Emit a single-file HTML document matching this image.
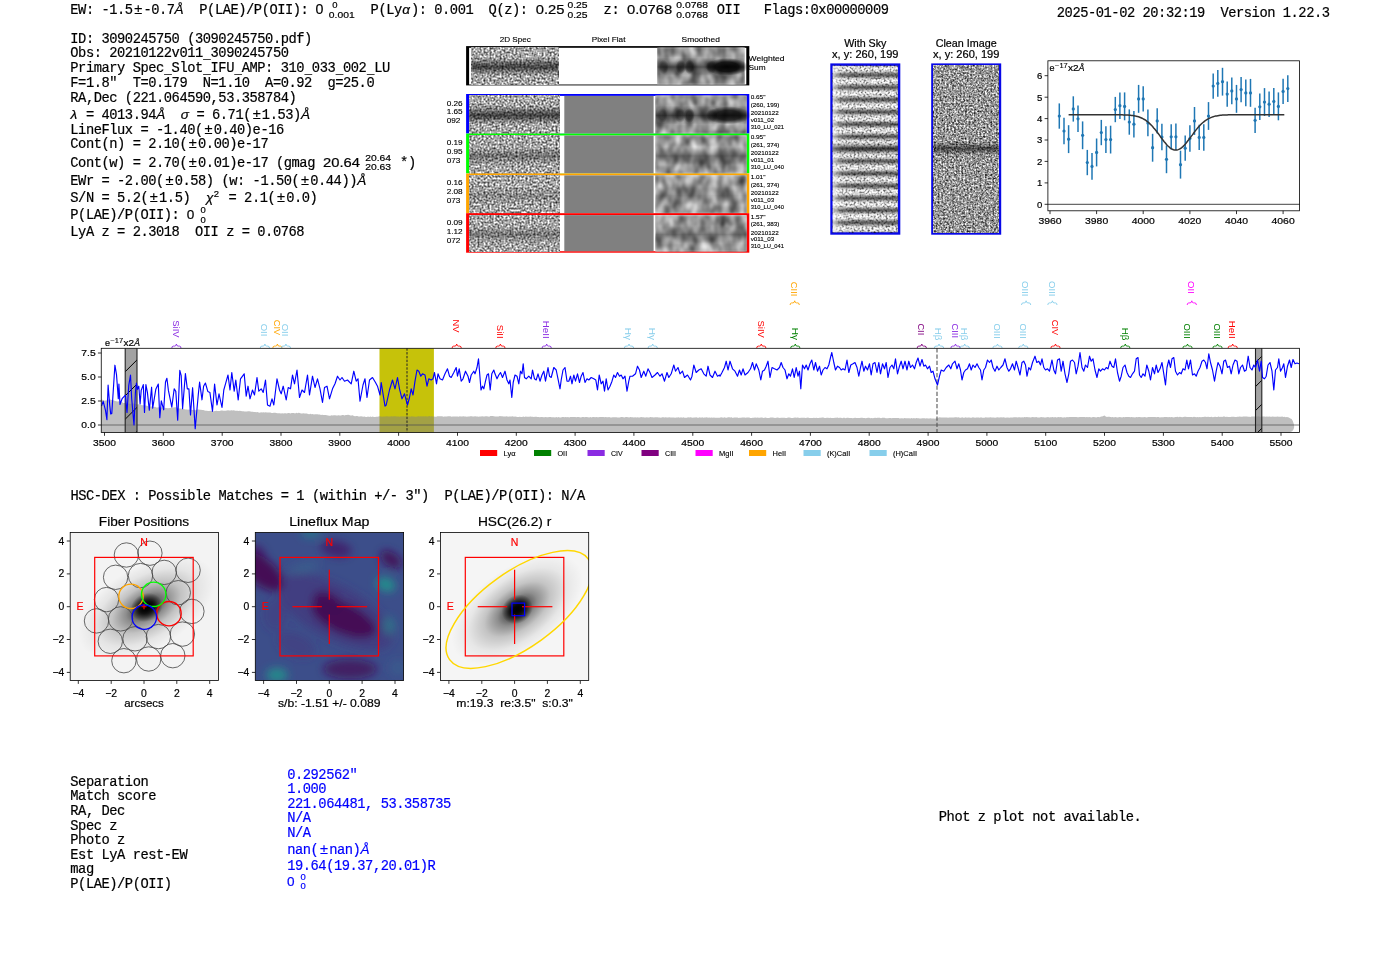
<!DOCTYPE html><html><head><meta charset="utf-8"><title>ELiXer</title><style>html,body{margin:0;padding:0;background:#fff;overflow:hidden}svg{display:block}text{white-space:pre}</style></head><body><svg width="1400" height="953" viewBox="0 0 1400 953" font-family="Liberation Sans, sans-serif"><rect width="1400" height="953" fill="#fff"/><defs><filter id="nz0" x="0" y="0" width="100%" height="100%" color-interpolation-filters="sRGB"><feTurbulence type="fractalNoise" baseFrequency="0.5 0.5" numOctaves="2" seed="3" result="t"/><feColorMatrix type="matrix" values="1.45 0 0 0 -0.075  1.45 0 0 0 -0.075  1.45 0 0 0 -0.075  0 0 0 0 1"/><feGaussianBlur stdDeviation="0.5"/></filter><filter id="sm0" x="0" y="0" width="100%" height="100%" color-interpolation-filters="sRGB"><feTurbulence type="fractalNoise" baseFrequency="0.11 0.07" numOctaves="2" seed="11" result="t"/><feColorMatrix type="matrix" values="0.95 0 0 0 0.115  0.95 0 0 0 0.115  0.95 0 0 0 0.115  0 0 0 0 1"/><feGaussianBlur stdDeviation="0.8"/></filter><filter id="nz1" x="0" y="0" width="100%" height="100%" color-interpolation-filters="sRGB"><feTurbulence type="fractalNoise" baseFrequency="0.5 0.5" numOctaves="2" seed="10" result="t"/><feColorMatrix type="matrix" values="1.45 0 0 0 -0.075  1.45 0 0 0 -0.075  1.45 0 0 0 -0.075  0 0 0 0 1"/><feGaussianBlur stdDeviation="0.5"/></filter><filter id="sm1" x="0" y="0" width="100%" height="100%" color-interpolation-filters="sRGB"><feTurbulence type="fractalNoise" baseFrequency="0.11 0.07" numOctaves="2" seed="16" result="t"/><feColorMatrix type="matrix" values="0.95 0 0 0 0.115  0.95 0 0 0 0.115  0.95 0 0 0 0.115  0 0 0 0 1"/><feGaussianBlur stdDeviation="0.8"/></filter><filter id="nz2" x="0" y="0" width="100%" height="100%" color-interpolation-filters="sRGB"><feTurbulence type="fractalNoise" baseFrequency="0.5 0.5" numOctaves="2" seed="17" result="t"/><feColorMatrix type="matrix" values="1.45 0 0 0 -0.075  1.45 0 0 0 -0.075  1.45 0 0 0 -0.075  0 0 0 0 1"/><feGaussianBlur stdDeviation="0.5"/></filter><filter id="sm2" x="0" y="0" width="100%" height="100%" color-interpolation-filters="sRGB"><feTurbulence type="fractalNoise" baseFrequency="0.11 0.07" numOctaves="2" seed="21" result="t"/><feColorMatrix type="matrix" values="0.95 0 0 0 0.115  0.95 0 0 0 0.115  0.95 0 0 0 0.115  0 0 0 0 1"/><feGaussianBlur stdDeviation="0.8"/></filter><filter id="nz3" x="0" y="0" width="100%" height="100%" color-interpolation-filters="sRGB"><feTurbulence type="fractalNoise" baseFrequency="0.5 0.5" numOctaves="2" seed="24" result="t"/><feColorMatrix type="matrix" values="1.45 0 0 0 -0.075  1.45 0 0 0 -0.075  1.45 0 0 0 -0.075  0 0 0 0 1"/><feGaussianBlur stdDeviation="0.5"/></filter><filter id="sm3" x="0" y="0" width="100%" height="100%" color-interpolation-filters="sRGB"><feTurbulence type="fractalNoise" baseFrequency="0.11 0.07" numOctaves="2" seed="26" result="t"/><feColorMatrix type="matrix" values="0.95 0 0 0 0.115  0.95 0 0 0 0.115  0.95 0 0 0 0.115  0 0 0 0 1"/><feGaussianBlur stdDeviation="0.8"/></filter><filter id="nz4" x="0" y="0" width="100%" height="100%" color-interpolation-filters="sRGB"><feTurbulence type="fractalNoise" baseFrequency="0.5 0.5" numOctaves="2" seed="31" result="t"/><feColorMatrix type="matrix" values="1.45 0 0 0 -0.075  1.45 0 0 0 -0.075  1.45 0 0 0 -0.075  0 0 0 0 1"/><feGaussianBlur stdDeviation="0.5"/></filter><filter id="sm4" x="0" y="0" width="100%" height="100%" color-interpolation-filters="sRGB"><feTurbulence type="fractalNoise" baseFrequency="0.11 0.07" numOctaves="2" seed="31" result="t"/><feColorMatrix type="matrix" values="0.95 0 0 0 0.115  0.95 0 0 0 0.115  0.95 0 0 0 0.115  0 0 0 0 1"/><feGaussianBlur stdDeviation="0.8"/></filter><filter id="nz5" x="0" y="0" width="100%" height="100%" color-interpolation-filters="sRGB"><feTurbulence type="fractalNoise" baseFrequency="0.5 0.5" numOctaves="2" seed="38" result="t"/><feColorMatrix type="matrix" values="1.45 0 0 0 -0.075  1.45 0 0 0 -0.075  1.45 0 0 0 -0.075  0 0 0 0 1"/><feGaussianBlur stdDeviation="0.5"/></filter><filter id="sm5" x="0" y="0" width="100%" height="100%" color-interpolation-filters="sRGB"><feTurbulence type="fractalNoise" baseFrequency="0.11 0.07" numOctaves="2" seed="36" result="t"/><feColorMatrix type="matrix" values="0.95 0 0 0 0.115  0.95 0 0 0 0.115  0.95 0 0 0 0.115  0 0 0 0 1"/><feGaussianBlur stdDeviation="0.8"/></filter><filter id="nz6" x="0" y="0" width="100%" height="100%" color-interpolation-filters="sRGB"><feTurbulence type="fractalNoise" baseFrequency="0.5 0.5" numOctaves="2" seed="45" result="t"/><feColorMatrix type="matrix" values="1.45 0 0 0 -0.075  1.45 0 0 0 -0.075  1.45 0 0 0 -0.075  0 0 0 0 1"/><feGaussianBlur stdDeviation="0.5"/></filter><filter id="sm6" x="0" y="0" width="100%" height="100%" color-interpolation-filters="sRGB"><feTurbulence type="fractalNoise" baseFrequency="0.11 0.07" numOctaves="2" seed="41" result="t"/><feColorMatrix type="matrix" values="0.95 0 0 0 0.115  0.95 0 0 0 0.115  0.95 0 0 0 0.115  0 0 0 0 1"/><feGaussianBlur stdDeviation="0.8"/></filter><filter id="nz7" x="0" y="0" width="100%" height="100%" color-interpolation-filters="sRGB"><feTurbulence type="fractalNoise" baseFrequency="0.5 0.5" numOctaves="2" seed="52" result="t"/><feColorMatrix type="matrix" values="1.45 0 0 0 -0.075  1.45 0 0 0 -0.075  1.45 0 0 0 -0.075  0 0 0 0 1"/><feGaussianBlur stdDeviation="0.5"/></filter><filter id="sm7" x="0" y="0" width="100%" height="100%" color-interpolation-filters="sRGB"><feTurbulence type="fractalNoise" baseFrequency="0.11 0.07" numOctaves="2" seed="46" result="t"/><feColorMatrix type="matrix" values="0.95 0 0 0 0.115  0.95 0 0 0 0.115  0.95 0 0 0 0.115  0 0 0 0 1"/><feGaussianBlur stdDeviation="0.8"/></filter><linearGradient id="band" x1="0" y1="0" x2="0" y2="1"><stop offset="0.26" stop-color="#000" stop-opacity="0"/><stop offset="0.40" stop-color="#000" stop-opacity="0.38"/><stop offset="0.52" stop-color="#000" stop-opacity="0.66"/><stop offset="0.62" stop-color="#000" stop-opacity="0.38"/><stop offset="0.76" stop-color="#000" stop-opacity="0"/></linearGradient><linearGradient id="band2" x1="0" y1="0" x2="0" y2="1"><stop offset="0.3" stop-color="#000" stop-opacity="0"/><stop offset="0.54" stop-color="#000" stop-opacity="0.38"/><stop offset="0.78" stop-color="#000" stop-opacity="0"/></linearGradient><radialGradient id="hot"><stop offset="0" stop-color="#000" stop-opacity="1"/><stop offset="0.55" stop-color="#000" stop-opacity="0.85"/><stop offset="1" stop-color="#000" stop-opacity="0"/></radialGradient><linearGradient id="lfade" x1="0" y1="0" x2="1" y2="0"><stop offset="0" stop-color="#fff" stop-opacity="0.7"/><stop offset="0.12" stop-color="#fff" stop-opacity="0.15"/><stop offset="0.3" stop-color="#fff" stop-opacity="0"/></linearGradient><linearGradient id="stripes" x1="0" y1="0" x2="0" y2="12.3" gradientUnits="userSpaceOnUse" spreadMethod="repeat"><stop offset="0.0" stop-color="rgb(100,100,100)"/><stop offset="0.1" stop-color="rgb(124,124,124)"/><stop offset="0.2" stop-color="rgb(179,179,179)"/><stop offset="0.3" stop-color="rgb(228,228,228)"/><stop offset="0.4" stop-color="rgb(250,250,250)"/><stop offset="0.5" stop-color="rgb(253,253,253)"/><stop offset="0.6" stop-color="rgb(250,250,250)"/><stop offset="0.7" stop-color="rgb(228,228,228)"/><stop offset="0.8" stop-color="rgb(179,179,179)"/><stop offset="0.9" stop-color="rgb(124,124,124)"/><stop offset="1.0" stop-color="rgb(100,100,100)"/></linearGradient><filter id="sky" x="0" y="0" width="100%" height="100%" color-interpolation-filters="sRGB"><feTurbulence type="fractalNoise" baseFrequency="0.5 0.5" numOctaves="2" seed="21" result="t"/><feColorMatrix type="matrix" values="1.9 0 0 0 -0.1  1.9 0 0 0 -0.1  1.9 0 0 0 -0.1  0 0 0 0 1"/><feGaussianBlur stdDeviation="0.4"/></filter><filter id="cln" x="0" y="0" width="100%" height="100%" color-interpolation-filters="sRGB"><feTurbulence type="fractalNoise" baseFrequency="0.55 0.55" numOctaves="2" seed="33" result="t"/><feColorMatrix type="matrix" values="1.45 0 0 0 -0.135  1.45 0 0 0 -0.135  1.45 0 0 0 -0.135  0 0 0 0 1"/><feGaussianBlur stdDeviation="0.4"/></filter><linearGradient id="cband" x1="0" y1="0" x2="0" y2="1"><stop offset="0.455" stop-color="#000" stop-opacity="0"/><stop offset="0.497" stop-color="#000" stop-opacity="0.55"/><stop offset="0.54" stop-color="#000" stop-opacity="0"/></linearGradient><radialGradient id="gal"><stop offset="0" stop-color="#000" stop-opacity="0.97"/><stop offset="0.07" stop-color="#000" stop-opacity="0.9"/><stop offset="0.16" stop-color="#000" stop-opacity="0.66"/><stop offset="0.3" stop-color="#000" stop-opacity="0.42"/><stop offset="0.5" stop-color="#000" stop-opacity="0.2"/><stop offset="0.75" stop-color="#000" stop-opacity="0.06"/><stop offset="1" stop-color="#000" stop-opacity="0"/></radialGradient><radialGradient id="core"><stop offset="0" stop-color="#000" stop-opacity="0.95"/><stop offset="0.45" stop-color="#000" stop-opacity="0.7"/><stop offset="1" stop-color="#000" stop-opacity="0"/></radialGradient><filter id="bl" x="-20%" y="-20%" width="140%" height="140%"><feGaussianBlur stdDeviation="4.2"/></filter></defs>
<text transform="translate(70.30,13.90) scale(1,1.025)" font-family="Liberation Mono" font-size="13.775" letter-spacing="-0.468" fill="#000" stroke="#000" stroke-width="0.2" xml:space="preserve">EW: -1.5</text>
<text x="138.28" y="13.90" text-anchor="middle" font-family="Liberation Sans" font-size="14.6" fill="#000" stroke="#000" stroke-width="0.15">±</text>
<text transform="translate(143.48,13.90) scale(1,1.025)" font-family="Liberation Mono" font-size="13.775" letter-spacing="-0.468" fill="#000" stroke="#000" stroke-width="0.2" xml:space="preserve">-0.7</text>
<text x="174.60" y="13.90" font-family="Liberation Sans" font-size="13.55" fill="#000" stroke="#000" stroke-width="0.2" text-anchor="start" font-style="italic" xml:space="preserve">Å</text>
<text transform="translate(199.30,13.90) scale(1,1.025)" font-family="Liberation Mono" font-size="13.775" letter-spacing="-0.468" fill="#000" stroke="#000" stroke-width="0.2" xml:space="preserve">P(LAE)/P(OII):</text>
<text x="315.60" y="13.90" font-family="Liberation Sans" font-size="14.19" fill="#000" stroke="#000" stroke-width="0.2" text-anchor="start" xml:space="preserve">0</text>
<text x="332.30" y="7.60" font-family="Liberation Sans" font-size="9.48" fill="#000" stroke="#000" stroke-width="0.2" text-anchor="start" xml:space="preserve">0</text>
<text x="328.80" y="17.50" font-family="Liberation Sans" font-size="9.48" fill="#000" stroke="#000" stroke-width="0.2" text-anchor="start" textLength="25.85" lengthAdjust="spacingAndGlyphs" xml:space="preserve">0.001</text>
<text transform="translate(370.60,13.90) scale(1,1.025)" font-family="Liberation Mono" font-size="13.775" letter-spacing="-0.468" fill="#000" stroke="#000" stroke-width="0.2" xml:space="preserve">P(Ly</text>
<text x="402.29" y="13.90" font-family="Liberation Sans" font-size="13.55" fill="#000" stroke="#000" stroke-width="0.2" text-anchor="start" font-style="italic" xml:space="preserve">α</text>
<text transform="translate(410.89,13.90) scale(1,1.025)" font-family="Liberation Mono" font-size="13.775" letter-spacing="-0.468" fill="#000" stroke="#000" stroke-width="0.2" xml:space="preserve">): 0.001</text>
<text transform="translate(488.60,13.90) scale(1,1.025)" font-family="Liberation Mono" font-size="13.775" letter-spacing="-0.468" fill="#000" stroke="#000" stroke-width="0.2" xml:space="preserve">Q(z):</text>
<text x="535.80" y="13.90" font-family="Liberation Sans" font-size="13.55" fill="#000" stroke="#000" stroke-width="0.2" text-anchor="start" textLength="28.72" lengthAdjust="spacingAndGlyphs" xml:space="preserve">0.25</text>
<text x="567.50" y="7.60" font-family="Liberation Sans" font-size="9.48" fill="#000" stroke="#000" stroke-width="0.2" text-anchor="start" textLength="20.11" lengthAdjust="spacingAndGlyphs" xml:space="preserve">0.25</text>
<text x="567.50" y="17.50" font-family="Liberation Sans" font-size="9.48" fill="#000" stroke="#000" stroke-width="0.2" text-anchor="start" textLength="20.11" lengthAdjust="spacingAndGlyphs" xml:space="preserve">0.25</text>
<text transform="translate(603.60,13.90) scale(1,1.025)" font-family="Liberation Mono" font-size="13.775" letter-spacing="-0.468" fill="#000" stroke="#000" stroke-width="0.2" xml:space="preserve">z:</text>
<text x="627.00" y="13.90" font-family="Liberation Sans" font-size="13.55" fill="#000" stroke="#000" stroke-width="0.2" text-anchor="start" textLength="45.14" lengthAdjust="spacingAndGlyphs" xml:space="preserve">0.0768</text>
<text x="676.30" y="7.60" font-family="Liberation Sans" font-size="9.48" fill="#000" stroke="#000" stroke-width="0.2" text-anchor="start" textLength="31.60" lengthAdjust="spacingAndGlyphs" xml:space="preserve">0.0768</text>
<text x="676.30" y="17.50" font-family="Liberation Sans" font-size="9.48" fill="#000" stroke="#000" stroke-width="0.2" text-anchor="start" textLength="31.60" lengthAdjust="spacingAndGlyphs" xml:space="preserve">0.0768</text>
<text transform="translate(716.80,13.90) scale(1,1.025)" font-family="Liberation Mono" font-size="13.775" letter-spacing="-0.468" fill="#000" stroke="#000" stroke-width="0.2" xml:space="preserve">OII</text>
<text transform="translate(763.80,13.90) scale(1,1.025)" font-family="Liberation Mono" font-size="13.775" letter-spacing="-0.468" fill="#000" stroke="#000" stroke-width="0.2" xml:space="preserve">Flags:0x00000009</text>
<text transform="translate(1056.80,16.60) scale(1,1.025)" font-family="Liberation Mono" font-size="13.775" letter-spacing="-0.468" fill="#000" stroke="#000" stroke-width="0.2" xml:space="preserve">2025-01-02 20:32:19  Version 1.22.3</text>
<text transform="translate(70.30,42.50) scale(1,1.025)" font-family="Liberation Mono" font-size="13.775" letter-spacing="-0.468" fill="#000" stroke="#000" stroke-width="0.2" xml:space="preserve">ID: 3090245750 (3090245750.pdf)</text>
<rect x="203.05" y="59.25" width="7.80" height="0.75" fill="#000"/>
<text transform="translate(70.30,56.90) scale(1,1.025)" font-family="Liberation Mono" font-size="13.775" letter-spacing="-0.468" fill="#000" stroke="#000" stroke-width="0.2" xml:space="preserve">Obs: 20210122v011 3090245750</text>
<rect x="164.06" y="74.15" width="7.80" height="0.75" fill="#000"/>
<rect x="203.05" y="74.15" width="7.80" height="0.75" fill="#000"/>
<rect x="234.24" y="74.15" width="7.80" height="0.75" fill="#000"/>
<rect x="304.41" y="74.15" width="7.80" height="0.75" fill="#000"/>
<rect x="335.60" y="74.15" width="7.80" height="0.75" fill="#000"/>
<rect x="366.79" y="74.15" width="7.80" height="0.75" fill="#000"/>
<text transform="translate(70.30,71.80) scale(1,1.025)" font-family="Liberation Mono" font-size="13.775" letter-spacing="-0.468" fill="#000" stroke="#000" stroke-width="0.2" xml:space="preserve">Primary Spec Slot IFU AMP: 310 033 002 LU</text>
<text transform="translate(70.30,86.80) scale(1,1.025)" font-family="Liberation Mono" font-size="13.775" letter-spacing="-0.468" fill="#000" stroke="#000" stroke-width="0.2" xml:space="preserve">F=1.8"  T=0.179  N=1.10  A=0.92  g=25.0</text>
<text transform="translate(70.30,101.80) scale(1,1.025)" font-family="Liberation Mono" font-size="13.775" letter-spacing="-0.468" fill="#000" stroke="#000" stroke-width="0.2" xml:space="preserve">RA,Dec (221.064590,53.358784)</text>
<text x="70.50" y="118.50" font-family="Liberation Sans" font-size="13.55" fill="#000" stroke="#000" stroke-width="0.2" text-anchor="start" font-style="italic" xml:space="preserve">λ</text>
<text transform="translate(78.10,118.50) scale(1,1.025)" font-family="Liberation Mono" font-size="13.775" letter-spacing="-0.468" fill="#000" stroke="#000" stroke-width="0.2" xml:space="preserve"> = 4013.94</text>
<text x="156.27" y="118.50" font-family="Liberation Sans" font-size="13.55" fill="#000" stroke="#000" stroke-width="0.2" text-anchor="start" font-style="italic" xml:space="preserve">Å</text>
<text x="180.69" y="118.50" font-family="Liberation Sans" font-size="13.55" fill="#000" stroke="#000" stroke-width="0.2" text-anchor="start" font-style="italic" xml:space="preserve">σ</text>
<text transform="translate(188.66,118.50) scale(1,1.025)" font-family="Liberation Mono" font-size="13.775" letter-spacing="-0.468" fill="#000" stroke="#000" stroke-width="0.2" xml:space="preserve"> = 6.71(</text>
<text x="256.64" y="118.50" text-anchor="middle" font-family="Liberation Sans" font-size="14.6" fill="#000" stroke="#000" stroke-width="0.15">±</text>
<text transform="translate(261.85,118.50) scale(1,1.025)" font-family="Liberation Mono" font-size="13.775" letter-spacing="-0.468" fill="#000" stroke="#000" stroke-width="0.2" xml:space="preserve">1.53)</text>
<text x="301.03" y="118.50" font-family="Liberation Sans" font-size="13.55" fill="#000" stroke="#000" stroke-width="0.2" text-anchor="start" font-style="italic" xml:space="preserve">Å</text>
<text transform="translate(70.30,133.60) scale(1,1.025)" font-family="Liberation Mono" font-size="13.775" letter-spacing="-0.468" fill="#000" stroke="#000" stroke-width="0.2" xml:space="preserve">LineFlux = -1.40(</text>
<text x="208.45" y="133.60" text-anchor="middle" font-family="Liberation Sans" font-size="14.6" fill="#000" stroke="#000" stroke-width="0.15">±</text>
<text transform="translate(213.66,133.60) scale(1,1.025)" font-family="Liberation Mono" font-size="13.775" letter-spacing="-0.468" fill="#000" stroke="#000" stroke-width="0.2" xml:space="preserve">0.40)e-16</text>
<text transform="translate(70.30,148.40) scale(1,1.025)" font-family="Liberation Mono" font-size="13.775" letter-spacing="-0.468" fill="#000" stroke="#000" stroke-width="0.2" xml:space="preserve">Cont(n) = 2.10(</text>
<text x="192.86" y="148.40" text-anchor="middle" font-family="Liberation Sans" font-size="14.6" fill="#000" stroke="#000" stroke-width="0.15">±</text>
<text transform="translate(198.06,148.40) scale(1,1.025)" font-family="Liberation Mono" font-size="13.775" letter-spacing="-0.468" fill="#000" stroke="#000" stroke-width="0.2" xml:space="preserve">0.00)e-17</text>
<text transform="translate(70.30,166.90) scale(1,1.025)" font-family="Liberation Mono" font-size="13.775" letter-spacing="-0.468" fill="#000" stroke="#000" stroke-width="0.2" xml:space="preserve">Cont(w) = 2.70(</text>
<text x="192.86" y="166.90" text-anchor="middle" font-family="Liberation Sans" font-size="14.6" fill="#000" stroke="#000" stroke-width="0.15">±</text>
<text transform="translate(198.06,166.90) scale(1,1.025)" font-family="Liberation Mono" font-size="13.775" letter-spacing="-0.468" fill="#000" stroke="#000" stroke-width="0.2" xml:space="preserve">0.01)e-17 (gmag </text>
<text x="323.02" y="166.90" font-family="Liberation Sans" font-size="13.55" fill="#000" stroke="#000" stroke-width="0.2" text-anchor="start" textLength="36.93" lengthAdjust="spacingAndGlyphs" xml:space="preserve">20.64</text>
<text x="365.15" y="160.50" font-family="Liberation Sans" font-size="9.48" fill="#000" stroke="#000" stroke-width="0.2" text-anchor="start" textLength="25.85" lengthAdjust="spacingAndGlyphs" xml:space="preserve">20.64</text>
<text x="365.15" y="170.10" font-family="Liberation Sans" font-size="9.48" fill="#000" stroke="#000" stroke-width="0.2" text-anchor="start" textLength="25.85" lengthAdjust="spacingAndGlyphs" xml:space="preserve">20.63</text>
<text transform="translate(392.30,166.90) scale(1,1.025)" font-family="Liberation Mono" font-size="13.775" letter-spacing="-0.468" fill="#000" stroke="#000" stroke-width="0.2" xml:space="preserve"> *)</text>
<text transform="translate(70.30,184.60) scale(1,1.025)" font-family="Liberation Mono" font-size="13.775" letter-spacing="-0.468" fill="#000" stroke="#000" stroke-width="0.2" xml:space="preserve">EWr = -2.00(</text>
<text x="169.47" y="184.60" text-anchor="middle" font-family="Liberation Sans" font-size="14.6" fill="#000" stroke="#000" stroke-width="0.15">±</text>
<text transform="translate(174.67,184.60) scale(1,1.025)" font-family="Liberation Mono" font-size="13.775" letter-spacing="-0.468" fill="#000" stroke="#000" stroke-width="0.2" xml:space="preserve">0.58) (w: -1.50(</text>
<text x="305.03" y="184.60" text-anchor="middle" font-family="Liberation Sans" font-size="14.6" fill="#000" stroke="#000" stroke-width="0.15">±</text>
<text transform="translate(310.23,184.60) scale(1,1.025)" font-family="Liberation Mono" font-size="13.775" letter-spacing="-0.468" fill="#000" stroke="#000" stroke-width="0.2" xml:space="preserve">0.44))</text>
<text x="357.22" y="184.60" font-family="Liberation Sans" font-size="13.55" fill="#000" stroke="#000" stroke-width="0.2" text-anchor="start" font-style="italic" xml:space="preserve">Å</text>
<text transform="translate(70.30,202.30) scale(1,1.025)" font-family="Liberation Mono" font-size="13.775" letter-spacing="-0.468" fill="#000" stroke="#000" stroke-width="0.2" xml:space="preserve">S/N = 5.2(</text>
<text x="153.87" y="202.30" text-anchor="middle" font-family="Liberation Sans" font-size="14.6" fill="#000" stroke="#000" stroke-width="0.15">±</text>
<text transform="translate(159.08,202.30) scale(1,1.025)" font-family="Liberation Mono" font-size="13.775" letter-spacing="-0.468" fill="#000" stroke="#000" stroke-width="0.2" xml:space="preserve">1.5)  </text>
<text x="206.06" y="202.30" font-family="Liberation Sans" font-size="13.55" fill="#000" stroke="#000" stroke-width="0.2" text-anchor="start" font-style="italic" xml:space="preserve">χ</text>
<text x="213.69" y="197.30" font-family="Liberation Sans" font-size="9.48" fill="#000" stroke="#000" stroke-width="0.2" text-anchor="start" xml:space="preserve">2</text>
<text transform="translate(220.74,202.30) scale(1,1.025)" font-family="Liberation Mono" font-size="13.775" letter-spacing="-0.468" fill="#000" stroke="#000" stroke-width="0.2" xml:space="preserve"> = 2.1(</text>
<text x="280.92" y="202.30" text-anchor="middle" font-family="Liberation Sans" font-size="14.6" fill="#000" stroke="#000" stroke-width="0.15">±</text>
<text transform="translate(286.13,202.30) scale(1,1.025)" font-family="Liberation Mono" font-size="13.775" letter-spacing="-0.468" fill="#000" stroke="#000" stroke-width="0.2" xml:space="preserve">0.0)</text>
<text transform="translate(70.30,219.40) scale(1,1.025)" font-family="Liberation Mono" font-size="13.775" letter-spacing="-0.468" fill="#000" stroke="#000" stroke-width="0.2" xml:space="preserve">P(LAE)/P(OII): </text>
<text x="186.85" y="219.40" font-family="Liberation Sans" font-size="13.55" fill="#000" stroke="#000" stroke-width="0.2" text-anchor="start" xml:space="preserve">0</text>
<text x="200.46" y="213.00" font-family="Liberation Sans" font-size="9.48" fill="#000" stroke="#000" stroke-width="0.2" text-anchor="start" xml:space="preserve">0</text>
<text x="200.46" y="222.60" font-family="Liberation Sans" font-size="9.48" fill="#000" stroke="#000" stroke-width="0.2" text-anchor="start" xml:space="preserve">0</text>
<text transform="translate(70.30,236.10) scale(1,1.025)" font-family="Liberation Mono" font-size="13.775" letter-spacing="-0.468" fill="#000" stroke="#000" stroke-width="0.2" xml:space="preserve">LyA z = 2.3018  OII z = 0.0768</text>
<text transform="translate(70.40,500.40) scale(1,1.025)" font-family="Liberation Mono" font-size="13.775" letter-spacing="-0.468" fill="#000" stroke="#000" stroke-width="0.2" xml:space="preserve">HSC-DEX : Possible Matches = 1 (within +/- 3")  P(LAE)/P(OII): N/A</text>
<text transform="translate(70.30,785.50) scale(1,1.025)" font-family="Liberation Mono" font-size="13.775" letter-spacing="-0.468" fill="#000" stroke="#000" stroke-width="0.2" xml:space="preserve">Separation</text>
<text transform="translate(70.30,799.90) scale(1,1.025)" font-family="Liberation Mono" font-size="13.775" letter-spacing="-0.468" fill="#000" stroke="#000" stroke-width="0.2" xml:space="preserve">Match score</text>
<text transform="translate(70.30,814.90) scale(1,1.025)" font-family="Liberation Mono" font-size="13.775" letter-spacing="-0.468" fill="#000" stroke="#000" stroke-width="0.2" xml:space="preserve">RA, Dec</text>
<text transform="translate(70.30,829.60) scale(1,1.025)" font-family="Liberation Mono" font-size="13.775" letter-spacing="-0.468" fill="#000" stroke="#000" stroke-width="0.2" xml:space="preserve">Spec z</text>
<text transform="translate(70.30,844.00) scale(1,1.025)" font-family="Liberation Mono" font-size="13.775" letter-spacing="-0.468" fill="#000" stroke="#000" stroke-width="0.2" xml:space="preserve">Photo z</text>
<text transform="translate(70.30,859.00) scale(1,1.025)" font-family="Liberation Mono" font-size="13.775" letter-spacing="-0.468" fill="#000" stroke="#000" stroke-width="0.2" xml:space="preserve">Est LyA rest-EW</text>
<text transform="translate(70.30,873.40) scale(1,1.025)" font-family="Liberation Mono" font-size="13.775" letter-spacing="-0.468" fill="#000" stroke="#000" stroke-width="0.2" xml:space="preserve">mag</text>
<text transform="translate(70.30,888.40) scale(1,1.025)" font-family="Liberation Mono" font-size="13.775" letter-spacing="-0.468" fill="#000" stroke="#000" stroke-width="0.2" xml:space="preserve">P(LAE)/P(OII)</text>
<text transform="translate(287.20,778.60) scale(1,1.025)" font-family="Liberation Mono" font-size="13.775" letter-spacing="-0.468" fill="#0000ff" stroke="#0000ff" stroke-width="0.2" xml:space="preserve">0.292562"</text>
<text transform="translate(287.20,793.00) scale(1,1.025)" font-family="Liberation Mono" font-size="13.775" letter-spacing="-0.468" fill="#0000ff" stroke="#0000ff" stroke-width="0.2" xml:space="preserve">1.000</text>
<text transform="translate(287.20,808.00) scale(1,1.025)" font-family="Liberation Mono" font-size="13.775" letter-spacing="-0.468" fill="#0000ff" stroke="#0000ff" stroke-width="0.2" xml:space="preserve">221.064481, 53.358735</text>
<text transform="translate(287.20,822.40) scale(1,1.025)" font-family="Liberation Mono" font-size="13.775" letter-spacing="-0.468" fill="#0000ff" stroke="#0000ff" stroke-width="0.2" xml:space="preserve">N/A</text>
<text transform="translate(287.20,837.40) scale(1,1.025)" font-family="Liberation Mono" font-size="13.775" letter-spacing="-0.468" fill="#0000ff" stroke="#0000ff" stroke-width="0.2" xml:space="preserve">N/A</text>
<text transform="translate(287.20,853.60) scale(1,1.025)" font-family="Liberation Mono" font-size="13.775" letter-spacing="-0.468" fill="#0000ff" stroke="#0000ff" stroke-width="0.2" xml:space="preserve">nan(</text>
<text x="323.99" y="853.60" text-anchor="middle" font-family="Liberation Sans" font-size="14.6" fill="#0000ff" stroke="#0000ff" stroke-width="0.15">±</text>
<text transform="translate(329.20,853.60) scale(1,1.025)" font-family="Liberation Mono" font-size="13.775" letter-spacing="-0.468" fill="#0000ff" stroke="#0000ff" stroke-width="0.2" xml:space="preserve">nan)</text>
<text x="360.58" y="853.60" font-family="Liberation Sans" font-size="13.55" fill="#0000ff" stroke="#0000ff" stroke-width="0.2" text-anchor="start" font-style="italic" xml:space="preserve">Å</text>
<text transform="translate(287.20,869.50) scale(1,1.025)" font-family="Liberation Mono" font-size="13.775" letter-spacing="-0.468" fill="#0000ff" stroke="#0000ff" stroke-width="0.2" xml:space="preserve">19.64(19.37,20.01)R</text>
<text x="287.00" y="886.00" font-family="Liberation Sans" font-size="13.55" fill="#0000ff" stroke="#0000ff" stroke-width="0.2" text-anchor="start" xml:space="preserve">0</text>
<text x="300.61" y="879.60" font-family="Liberation Sans" font-size="9.48" fill="#0000ff" stroke="#0000ff" stroke-width="0.2" text-anchor="start" xml:space="preserve">0</text>
<text x="300.61" y="889.20" font-family="Liberation Sans" font-size="9.48" fill="#0000ff" stroke="#0000ff" stroke-width="0.2" text-anchor="start" xml:space="preserve">0</text>
<text transform="translate(938.80,821.30) scale(1,1.025)" font-family="Liberation Mono" font-size="13.775" letter-spacing="-0.468" fill="#000" stroke="#000" stroke-width="0.2" xml:space="preserve">Phot z plot not available.</text>
<text x="515.30" y="41.90" font-family="Liberation Sans" font-size="7.88" fill="#000" stroke="#000" stroke-width="0.12" text-anchor="middle" textLength="31.19" lengthAdjust="spacingAndGlyphs" xml:space="preserve">2D Spec</text>
<text x="608.60" y="41.90" font-family="Liberation Sans" font-size="7.88" fill="#000" stroke="#000" stroke-width="0.12" text-anchor="middle" textLength="33.67" lengthAdjust="spacingAndGlyphs" xml:space="preserve">Pixel Flat</text>
<text x="700.70" y="41.90" font-family="Liberation Sans" font-size="7.88" fill="#000" stroke="#000" stroke-width="0.12" text-anchor="middle" textLength="38.31" lengthAdjust="spacingAndGlyphs" xml:space="preserve">Smoothed</text>
<rect x="466.1" y="46.1" width="283.2" height="39.3" fill="#000"/>
<rect x="469.1" y="47.8" width="277.2" height="36.7" fill="#fff"/>
<rect x="471.4" y="47.9" width="87.2" height="36.7" filter="url(#nz0)"/>
<rect x="471.4" y="47.9" width="87.2" height="36.7" fill="url(#band)" opacity="0.95"/>
<rect x="657.4" y="47.9" width="86.9" height="36.7" filter="url(#sm0)"/>
<rect x="657.4" y="47.9" width="86.9" height="36.7" fill="url(#band)" opacity="0.9"/>
<ellipse cx="726.9" cy="66.8" rx="21.7" ry="8.8" fill="url(#hot)" opacity="0.95"/>
<ellipse cx="663.5" cy="67.0" rx="5.2" ry="7.3" fill="url(#hot)" opacity="0.35"/>
<ellipse cx="680.9" cy="67.0" rx="5.2" ry="7.3" fill="url(#hot)" opacity="0.4"/>
<ellipse cx="689.6" cy="67.0" rx="5.2" ry="7.3" fill="url(#hot)" opacity="0.5"/>
<ellipse cx="711.3" cy="67.0" rx="5.2" ry="7.3" fill="url(#hot)" opacity="0.35"/>
<text x="748.60" y="61.20" font-family="Liberation Sans" font-size="7.98" fill="#000" stroke="#000" stroke-width="0.12" text-anchor="start" textLength="35.98" lengthAdjust="spacingAndGlyphs" xml:space="preserve">Weighted</text>
<text x="748.60" y="70.00" font-family="Liberation Sans" font-size="7.98" fill="#000" stroke="#000" stroke-width="0.12" text-anchor="start" textLength="17.04" lengthAdjust="spacingAndGlyphs" xml:space="preserve">Sum</text>
<rect x="466.1" y="94.0" width="283.2" height="39.5" fill="#0000ff"/>
<rect x="469.0" y="95.9" width="277.6" height="37.6" fill="#fff"/>
<rect x="469.3" y="95.9" width="90.7" height="37.6" filter="url(#nz1)"/>
<rect x="469.3" y="95.9" width="90.7" height="37.6" fill="url(#band)" opacity="0.95"/>
<rect x="564.3" y="95.9" width="89.3" height="37.6" fill="#808080"/>
<rect x="655.7" y="95.9" width="90.9" height="37.6" filter="url(#sm1)"/>
<rect x="655.7" y="95.9" width="90.9" height="37.6" fill="url(#band)" opacity="0.85"/>
<ellipse cx="728.4" cy="115.3" rx="22.7" ry="9.0" fill="url(#hot)" opacity="0.8"/>
<ellipse cx="662.1" cy="115.5" rx="5.5" ry="7.5" fill="url(#hot)" opacity="0.35"/>
<ellipse cx="680.2" cy="115.5" rx="5.5" ry="7.5" fill="url(#hot)" opacity="0.4"/>
<ellipse cx="689.3" cy="115.5" rx="5.5" ry="7.5" fill="url(#hot)" opacity="0.5"/>
<ellipse cx="712.1" cy="115.5" rx="5.5" ry="7.5" fill="url(#hot)" opacity="0.35"/>
<text x="446.70" y="105.50" font-family="Liberation Sans" font-size="7.56" fill="#000" stroke="#000" stroke-width="0.12" text-anchor="start" textLength="16.03" lengthAdjust="spacingAndGlyphs" xml:space="preserve">0.26</text>
<text x="446.70" y="114.40" font-family="Liberation Sans" font-size="7.56" fill="#000" stroke="#000" stroke-width="0.12" text-anchor="start" textLength="16.03" lengthAdjust="spacingAndGlyphs" xml:space="preserve">1.65</text>
<text x="446.70" y="123.30" font-family="Liberation Sans" font-size="7.56" fill="#000" stroke="#000" stroke-width="0.12" text-anchor="start" textLength="13.74" lengthAdjust="spacingAndGlyphs" xml:space="preserve">092</text>
<text x="750.70" y="99.40" font-family="Liberation Sans" font-size="5.78" fill="#000" stroke="#000" stroke-width="0.12" text-anchor="start" textLength="14.78" lengthAdjust="spacingAndGlyphs" xml:space="preserve">0.65"</text>
<text x="750.70" y="107.00" font-family="Liberation Sans" font-size="5.78" fill="#000" stroke="#000" stroke-width="0.12" text-anchor="start" textLength="28.78" lengthAdjust="spacingAndGlyphs" xml:space="preserve">(260, 199)</text>
<text x="750.70" y="115.30" font-family="Liberation Sans" font-size="5.78" fill="#000" stroke="#000" stroke-width="0.12" text-anchor="start" textLength="28.00" lengthAdjust="spacingAndGlyphs" xml:space="preserve">20210122</text>
<text x="750.70" y="122.00" font-family="Liberation Sans" font-size="5.78" fill="#000" stroke="#000" stroke-width="0.12" text-anchor="start" textLength="23.50" lengthAdjust="spacingAndGlyphs" xml:space="preserve">v011_02</text>
<text x="750.70" y="129.10" font-family="Liberation Sans" font-size="5.78" fill="#000" stroke="#000" stroke-width="0.12" text-anchor="start" textLength="33.31" lengthAdjust="spacingAndGlyphs" xml:space="preserve">310_LU_021</text>
<rect x="466.1" y="133.6" width="283.2" height="39.8" fill="#00ff00"/>
<rect x="469.0" y="135.5" width="277.6" height="37.9" fill="#fff"/>
<rect x="469.3" y="135.5" width="90.7" height="37.9" filter="url(#nz2)"/>
<rect x="469.3" y="135.5" width="90.7" height="37.9" fill="url(#band2)" opacity="0.9"/>
<rect x="564.3" y="135.5" width="89.3" height="37.9" fill="#808080"/>
<rect x="655.7" y="135.5" width="90.9" height="37.9" filter="url(#sm2)"/>
<rect x="655.7" y="135.5" width="90.9" height="37.9" fill="url(#band2)" opacity="1.0"/>
<text x="446.70" y="145.10" font-family="Liberation Sans" font-size="7.56" fill="#000" stroke="#000" stroke-width="0.12" text-anchor="start" textLength="16.03" lengthAdjust="spacingAndGlyphs" xml:space="preserve">0.19</text>
<text x="446.70" y="154.00" font-family="Liberation Sans" font-size="7.56" fill="#000" stroke="#000" stroke-width="0.12" text-anchor="start" textLength="16.03" lengthAdjust="spacingAndGlyphs" xml:space="preserve">0.95</text>
<text x="446.70" y="162.90" font-family="Liberation Sans" font-size="7.56" fill="#000" stroke="#000" stroke-width="0.12" text-anchor="start" textLength="13.74" lengthAdjust="spacingAndGlyphs" xml:space="preserve">073</text>
<text x="750.70" y="139.00" font-family="Liberation Sans" font-size="5.78" fill="#000" stroke="#000" stroke-width="0.12" text-anchor="start" textLength="14.78" lengthAdjust="spacingAndGlyphs" xml:space="preserve">0.95"</text>
<text x="750.70" y="146.60" font-family="Liberation Sans" font-size="5.78" fill="#000" stroke="#000" stroke-width="0.12" text-anchor="start" textLength="28.78" lengthAdjust="spacingAndGlyphs" xml:space="preserve">(261, 374)</text>
<text x="750.70" y="154.90" font-family="Liberation Sans" font-size="5.78" fill="#000" stroke="#000" stroke-width="0.12" text-anchor="start" textLength="28.00" lengthAdjust="spacingAndGlyphs" xml:space="preserve">20210122</text>
<text x="750.70" y="161.60" font-family="Liberation Sans" font-size="5.78" fill="#000" stroke="#000" stroke-width="0.12" text-anchor="start" textLength="23.50" lengthAdjust="spacingAndGlyphs" xml:space="preserve">v011_01</text>
<text x="750.70" y="168.70" font-family="Liberation Sans" font-size="5.78" fill="#000" stroke="#000" stroke-width="0.12" text-anchor="start" textLength="33.31" lengthAdjust="spacingAndGlyphs" xml:space="preserve">310_LU_040</text>
<rect x="466.1" y="173.5" width="283.2" height="39.6" fill="#ffa500"/>
<rect x="469.0" y="175.4" width="277.6" height="37.7" fill="#fff"/>
<rect x="469.3" y="175.4" width="90.7" height="37.7" filter="url(#nz3)"/>
<rect x="469.3" y="175.4" width="90.7" height="37.7" fill="url(#band2)" opacity="0.5"/>
<rect x="564.3" y="175.4" width="89.3" height="37.7" fill="#808080"/>
<rect x="655.7" y="175.4" width="90.9" height="37.7" filter="url(#sm3)"/>
<rect x="655.7" y="175.4" width="90.9" height="37.7" fill="url(#band2)" opacity="0.5"/>
<text x="446.70" y="185.00" font-family="Liberation Sans" font-size="7.56" fill="#000" stroke="#000" stroke-width="0.12" text-anchor="start" textLength="16.03" lengthAdjust="spacingAndGlyphs" xml:space="preserve">0.16</text>
<text x="446.70" y="193.90" font-family="Liberation Sans" font-size="7.56" fill="#000" stroke="#000" stroke-width="0.12" text-anchor="start" textLength="16.03" lengthAdjust="spacingAndGlyphs" xml:space="preserve">2.08</text>
<text x="446.70" y="202.80" font-family="Liberation Sans" font-size="7.56" fill="#000" stroke="#000" stroke-width="0.12" text-anchor="start" textLength="13.74" lengthAdjust="spacingAndGlyphs" xml:space="preserve">073</text>
<text x="750.70" y="178.90" font-family="Liberation Sans" font-size="5.78" fill="#000" stroke="#000" stroke-width="0.12" text-anchor="start" textLength="14.78" lengthAdjust="spacingAndGlyphs" xml:space="preserve">1.01"</text>
<text x="750.70" y="186.50" font-family="Liberation Sans" font-size="5.78" fill="#000" stroke="#000" stroke-width="0.12" text-anchor="start" textLength="28.78" lengthAdjust="spacingAndGlyphs" xml:space="preserve">(261, 374)</text>
<text x="750.70" y="194.80" font-family="Liberation Sans" font-size="5.78" fill="#000" stroke="#000" stroke-width="0.12" text-anchor="start" textLength="28.00" lengthAdjust="spacingAndGlyphs" xml:space="preserve">20210122</text>
<text x="750.70" y="201.50" font-family="Liberation Sans" font-size="5.78" fill="#000" stroke="#000" stroke-width="0.12" text-anchor="start" textLength="23.50" lengthAdjust="spacingAndGlyphs" xml:space="preserve">v011_03</text>
<text x="750.70" y="208.60" font-family="Liberation Sans" font-size="5.78" fill="#000" stroke="#000" stroke-width="0.12" text-anchor="start" textLength="33.31" lengthAdjust="spacingAndGlyphs" xml:space="preserve">310_LU_040</text>
<rect x="466.1" y="213.2" width="283.2" height="39.5" fill="#ff0000"/>
<rect x="469.0" y="215.1" width="277.6" height="36.1" fill="#fff"/>
<rect x="469.3" y="215.1" width="90.7" height="36.1" filter="url(#nz4)"/>
<rect x="469.3" y="215.1" width="90.7" height="36.1" fill="url(#band2)" opacity="0.8"/>
<rect x="564.3" y="215.1" width="89.3" height="36.1" fill="#808080"/>
<rect x="655.7" y="215.1" width="90.9" height="36.1" filter="url(#sm4)"/>
<rect x="655.7" y="215.1" width="90.9" height="36.1" fill="url(#band2)" opacity="0.9"/>
<text x="446.70" y="224.70" font-family="Liberation Sans" font-size="7.56" fill="#000" stroke="#000" stroke-width="0.12" text-anchor="start" textLength="16.03" lengthAdjust="spacingAndGlyphs" xml:space="preserve">0.09</text>
<text x="446.70" y="233.60" font-family="Liberation Sans" font-size="7.56" fill="#000" stroke="#000" stroke-width="0.12" text-anchor="start" textLength="16.03" lengthAdjust="spacingAndGlyphs" xml:space="preserve">1.12</text>
<text x="446.70" y="242.50" font-family="Liberation Sans" font-size="7.56" fill="#000" stroke="#000" stroke-width="0.12" text-anchor="start" textLength="13.74" lengthAdjust="spacingAndGlyphs" xml:space="preserve">072</text>
<text x="750.70" y="218.60" font-family="Liberation Sans" font-size="5.78" fill="#000" stroke="#000" stroke-width="0.12" text-anchor="start" textLength="14.78" lengthAdjust="spacingAndGlyphs" xml:space="preserve">1.57"</text>
<text x="750.70" y="226.20" font-family="Liberation Sans" font-size="5.78" fill="#000" stroke="#000" stroke-width="0.12" text-anchor="start" textLength="28.78" lengthAdjust="spacingAndGlyphs" xml:space="preserve">(261, 383)</text>
<text x="750.70" y="234.50" font-family="Liberation Sans" font-size="5.78" fill="#000" stroke="#000" stroke-width="0.12" text-anchor="start" textLength="28.00" lengthAdjust="spacingAndGlyphs" xml:space="preserve">20210122</text>
<text x="750.70" y="241.20" font-family="Liberation Sans" font-size="5.78" fill="#000" stroke="#000" stroke-width="0.12" text-anchor="start" textLength="23.50" lengthAdjust="spacingAndGlyphs" xml:space="preserve">v011_03</text>
<text x="750.70" y="248.30" font-family="Liberation Sans" font-size="5.78" fill="#000" stroke="#000" stroke-width="0.12" text-anchor="start" textLength="33.31" lengthAdjust="spacingAndGlyphs" xml:space="preserve">310_LU_041</text>
<text x="865.30" y="47.40" font-family="Liberation Sans" font-size="10.19" fill="#000" stroke="#000" stroke-width="0.2" text-anchor="middle" textLength="42.28" lengthAdjust="spacingAndGlyphs" xml:space="preserve">With Sky</text>
<text x="865.30" y="58.20" font-family="Liberation Sans" font-size="10.19" fill="#000" stroke="#000" stroke-width="0.2" text-anchor="middle" textLength="66.49" lengthAdjust="spacingAndGlyphs" xml:space="preserve">x, y: 260, 199</text>
<rect x="830.3" y="63.4" width="70.0" height="171.3" fill="#0808e8"/>
<g transform="translate(0,75.1)"><rect x="832.7" y="-9.3" width="65.2" height="166.5" fill="url(#stripes)"/></g>
<rect x="832.7" y="65.8" width="65.2" height="166.5" filter="url(#sky)" style="mix-blend-mode:multiply" opacity="0.9"/>
<rect x="832.7" y="65.8" width="65.2" height="166.5" fill="url(#lfade)"/>
<rect x="832.7" y="65.8" width="65.2" height="166.5" fill="url(#cband)" opacity="0.7"/>
<text x="966.20" y="47.40" font-family="Liberation Sans" font-size="10.19" fill="#000" stroke="#000" stroke-width="0.2" text-anchor="middle" textLength="60.99" lengthAdjust="spacingAndGlyphs" xml:space="preserve">Clean Image</text>
<text x="966.20" y="58.20" font-family="Liberation Sans" font-size="10.19" fill="#000" stroke="#000" stroke-width="0.2" text-anchor="middle" textLength="66.49" lengthAdjust="spacingAndGlyphs" xml:space="preserve">x, y: 260, 199</text>
<rect x="931.2" y="63.4" width="70.0" height="171.3" fill="#0808e8"/>
<rect x="933.6" y="65.8" width="65.2" height="166.5" filter="url(#cln)"/>
<rect x="933.6" y="65.8" width="65.2" height="166.5" fill="url(#cband)"/>
<rect x="1047.9" y="60.8" width="251.7" height="150.0" fill="#fff" stroke="none"/>
<line x1="1047.9" x2="1299.6" y1="204.3" y2="204.3" stroke="#444" stroke-width="1"/>
<g stroke="#1f77b4" stroke-width="1.5"><line x1="1059.3" x2="1059.3" y1="128.7" y2="103.4"/><line x1="1064.0" x2="1064.0" y1="144.3" y2="117.7"/><line x1="1068.6" x2="1068.6" y1="153.1" y2="125.2"/><line x1="1073.3" x2="1073.3" y1="121.6" y2="96.3"/><line x1="1078.0" x2="1078.0" y1="132.1" y2="105.5"/><line x1="1082.6" x2="1082.6" y1="149.2" y2="121.4"/><line x1="1087.3" x2="1087.3" y1="175.2" y2="149.9"/><line x1="1092.0" x2="1092.0" y1="179.7" y2="153.1"/><line x1="1096.6" x2="1096.6" y1="166.4" y2="138.5"/><line x1="1101.3" x2="1101.3" y1="145.2" y2="119.9"/><line x1="1105.9" x2="1105.9" y1="152.9" y2="126.3"/><line x1="1110.6" x2="1110.6" y1="153.5" y2="125.7"/><line x1="1115.3" x2="1115.3" y1="122.2" y2="96.9"/><line x1="1119.9" x2="1119.9" y1="119.0" y2="92.4"/><line x1="1124.6" x2="1124.6" y1="120.3" y2="92.4"/><line x1="1129.3" x2="1129.3" y1="134.7" y2="109.4"/><line x1="1133.9" x2="1133.9" y1="137.4" y2="110.9"/><line x1="1138.6" x2="1138.6" y1="112.8" y2="84.9"/><line x1="1143.2" x2="1143.2" y1="111.5" y2="86.2"/><line x1="1147.9" x2="1147.9" y1="136.2" y2="109.6"/><line x1="1152.6" x2="1152.6" y1="161.7" y2="133.8"/><line x1="1157.2" x2="1157.2" y1="133.6" y2="108.3"/><line x1="1161.9" x2="1161.9" y1="150.3" y2="123.7"/><line x1="1166.5" x2="1166.5" y1="173.2" y2="145.4"/><line x1="1171.2" x2="1171.2" y1="149.4" y2="124.2"/><line x1="1175.9" x2="1175.9" y1="150.1" y2="123.5"/><line x1="1180.5" x2="1180.5" y1="178.6" y2="150.7"/><line x1="1185.2" x2="1185.2" y1="160.8" y2="135.5"/><line x1="1189.9" x2="1189.9" y1="151.8" y2="125.2"/><line x1="1194.5" x2="1194.5" y1="134.9" y2="107.0"/><line x1="1199.2" x2="1199.2" y1="150.1" y2="124.8"/><line x1="1203.8" x2="1203.8" y1="150.7" y2="124.2"/><line x1="1208.5" x2="1208.5" y1="129.9" y2="102.1"/><line x1="1213.2" x2="1213.2" y1="98.7" y2="73.4"/><line x1="1217.8" x2="1217.8" y1="96.7" y2="70.1"/><line x1="1222.5" x2="1222.5" y1="95.6" y2="67.8"/><line x1="1227.2" x2="1227.2" y1="106.8" y2="81.5"/><line x1="1231.8" x2="1231.8" y1="104.2" y2="77.6"/><line x1="1236.5" x2="1236.5" y1="112.8" y2="84.9"/><line x1="1241.1" x2="1241.1" y1="102.3" y2="77.0"/><line x1="1245.8" x2="1245.8" y1="106.2" y2="79.6"/><line x1="1250.5" x2="1250.5" y1="106.8" y2="78.9"/><line x1="1255.1" x2="1255.1" y1="132.9" y2="107.7"/><line x1="1259.8" x2="1259.8" y1="120.1" y2="93.5"/><line x1="1264.5" x2="1264.5" y1="116.0" y2="88.1"/><line x1="1269.1" x2="1269.1" y1="116.9" y2="91.6"/><line x1="1273.8" x2="1273.8" y1="114.7" y2="88.1"/><line x1="1278.4" x2="1278.4" y1="120.3" y2="92.4"/><line x1="1283.1" x2="1283.1" y1="104.0" y2="78.7"/><line x1="1287.8" x2="1287.8" y1="101.9" y2="75.3"/></g>
<g fill="#1f77b4"><circle cx="1059.3" cy="116.0" r="1.6"/><circle cx="1064.0" cy="131.0" r="1.6"/><circle cx="1068.6" cy="139.2" r="1.6"/><circle cx="1073.3" cy="108.9" r="1.6"/><circle cx="1078.0" cy="118.8" r="1.6"/><circle cx="1082.6" cy="135.3" r="1.6"/><circle cx="1087.3" cy="162.5" r="1.6"/><circle cx="1092.0" cy="166.4" r="1.6"/><circle cx="1096.6" cy="152.4" r="1.6"/><circle cx="1101.3" cy="132.5" r="1.6"/><circle cx="1105.9" cy="139.6" r="1.6"/><circle cx="1110.6" cy="139.6" r="1.6"/><circle cx="1115.3" cy="109.6" r="1.6"/><circle cx="1119.9" cy="105.7" r="1.6"/><circle cx="1124.6" cy="106.4" r="1.6"/><circle cx="1129.3" cy="122.0" r="1.6"/><circle cx="1133.9" cy="124.2" r="1.6"/><circle cx="1138.6" cy="98.9" r="1.6"/><circle cx="1143.2" cy="98.9" r="1.6"/><circle cx="1147.9" cy="122.9" r="1.6"/><circle cx="1152.6" cy="147.7" r="1.6"/><circle cx="1157.2" cy="120.9" r="1.6"/><circle cx="1161.9" cy="137.0" r="1.6"/><circle cx="1166.5" cy="159.3" r="1.6"/><circle cx="1171.2" cy="136.8" r="1.6"/><circle cx="1175.9" cy="136.8" r="1.6"/><circle cx="1180.5" cy="164.7" r="1.6"/><circle cx="1185.2" cy="148.2" r="1.6"/><circle cx="1189.9" cy="138.5" r="1.6"/><circle cx="1194.5" cy="120.9" r="1.6"/><circle cx="1199.2" cy="137.4" r="1.6"/><circle cx="1203.8" cy="137.4" r="1.6"/><circle cx="1208.5" cy="116.0" r="1.6"/><circle cx="1213.2" cy="86.0" r="1.6"/><circle cx="1217.8" cy="83.4" r="1.6"/><circle cx="1222.5" cy="81.7" r="1.6"/><circle cx="1227.2" cy="94.1" r="1.6"/><circle cx="1231.8" cy="90.9" r="1.6"/><circle cx="1236.5" cy="98.9" r="1.6"/><circle cx="1241.1" cy="89.6" r="1.6"/><circle cx="1245.8" cy="92.9" r="1.6"/><circle cx="1250.5" cy="92.9" r="1.6"/><circle cx="1255.1" cy="120.3" r="1.6"/><circle cx="1259.8" cy="106.8" r="1.6"/><circle cx="1264.5" cy="102.1" r="1.6"/><circle cx="1269.1" cy="104.2" r="1.6"/><circle cx="1273.8" cy="101.4" r="1.6"/><circle cx="1278.4" cy="106.4" r="1.6"/><circle cx="1283.1" cy="91.4" r="1.6"/><circle cx="1287.8" cy="88.6" r="1.6"/></g>
<polyline points="1068.6,114.7 1069.8,114.7 1071.0,114.7 1072.1,114.7 1073.3,114.7 1074.5,114.7 1075.6,114.7 1076.8,114.7 1078.0,114.7 1079.1,114.7 1080.3,114.7 1081.5,114.7 1082.6,114.7 1083.8,114.7 1085.0,114.7 1086.1,114.7 1087.3,114.7 1088.5,114.7 1089.6,114.7 1090.8,114.7 1092.0,114.7 1093.1,114.7 1094.3,114.7 1095.5,114.7 1096.6,114.7 1097.8,114.7 1099.0,114.7 1100.1,114.7 1101.3,114.7 1102.4,114.7 1103.6,114.7 1104.8,114.7 1105.9,114.7 1107.1,114.7 1108.3,114.7 1109.4,114.7 1110.6,114.7 1111.8,114.7 1112.9,114.7 1114.1,114.7 1115.3,114.7 1116.4,114.7 1117.6,114.8 1118.8,114.8 1119.9,114.8 1121.1,114.8 1122.3,114.8 1123.4,114.9 1124.6,114.9 1125.8,114.9 1126.9,115.0 1128.1,115.1 1129.3,115.2 1130.4,115.3 1131.6,115.4 1132.8,115.5 1133.9,115.7 1135.1,115.9 1136.2,116.2 1137.4,116.5 1138.6,116.8 1139.7,117.2 1140.9,117.7 1142.1,118.2 1143.2,118.8 1144.4,119.5 1145.6,120.2 1146.7,121.1 1147.9,122.0 1149.1,123.0 1150.2,124.1 1151.4,125.3 1152.6,126.5 1153.7,127.9 1154.9,129.3 1156.1,130.8 1157.2,132.3 1158.4,133.8 1159.6,135.4 1160.7,137.0 1161.9,138.6 1163.1,140.2 1164.2,141.7 1165.4,143.1 1166.5,144.5 1167.7,145.7 1168.9,146.8 1170.0,147.8 1171.2,148.6 1172.4,149.3 1173.5,149.7 1174.7,150.0 1175.9,150.1 1177.0,150.0 1178.2,149.6 1179.4,149.1 1180.5,148.5 1181.7,147.6 1182.9,146.6 1184.0,145.4 1185.2,144.2 1186.4,142.8 1187.5,141.3 1188.7,139.8 1189.9,138.2 1191.0,136.6 1192.2,135.1 1193.4,133.5 1194.5,131.9 1195.7,130.4 1196.9,128.9 1198.0,127.5 1199.2,126.2 1200.3,125.0 1201.5,123.8 1202.7,122.7 1203.8,121.8 1205.0,120.9 1206.2,120.0 1207.3,119.3 1208.5,118.7 1209.7,118.1 1210.8,117.6 1212.0,117.1 1213.2,116.7 1214.3,116.4 1215.5,116.1 1216.7,115.9 1217.8,115.7 1219.0,115.5 1220.2,115.3 1221.3,115.2 1222.5,115.1 1223.7,115.0 1224.8,115.0 1226.0,114.9 1227.2,114.9 1228.3,114.8 1229.5,114.8 1230.7,114.8 1231.8,114.8 1233.0,114.8 1234.1,114.8 1235.3,114.7 1236.5,114.7 1237.6,114.7 1238.8,114.7 1240.0,114.7 1241.1,114.7 1242.3,114.7 1243.5,114.7 1244.6,114.7 1245.8,114.7 1247.0,114.7 1248.1,114.7 1249.3,114.7 1250.5,114.7 1251.6,114.7 1252.8,114.7 1254.0,114.7 1255.1,114.7 1256.3,114.7 1257.5,114.7 1258.6,114.7 1259.8,114.7 1261.0,114.7 1262.1,114.7 1263.3,114.7 1264.5,114.7 1265.6,114.7 1266.8,114.7 1267.9,114.7 1269.1,114.7 1270.3,114.7 1271.4,114.7 1272.6,114.7 1273.8,114.7 1274.9,114.7 1276.1,114.7 1277.3,114.7 1278.4,114.7 1279.6,114.7 1280.8,114.7 1281.9,114.7 1283.1,114.7 1284.3,114.7" fill="none" stroke="#333" stroke-width="1.5"/>
<rect x="1047.9" y="60.8" width="251.7" height="150.0" fill="none" stroke="#000" stroke-width="0.8"/>
<line x1="1050.0" x2="1050.0" y1="210.8" y2="214.10000000000002" stroke="#000" stroke-width="0.8"/>
<text x="1050.00" y="224.00" font-family="Liberation Sans" font-size="9.55" fill="#000" stroke="#000" stroke-width="0.2" text-anchor="middle" textLength="23.16" lengthAdjust="spacingAndGlyphs" xml:space="preserve">3960</text>
<line x1="1096.6" x2="1096.6" y1="210.8" y2="214.10000000000002" stroke="#000" stroke-width="0.8"/>
<text x="1096.62" y="224.00" font-family="Liberation Sans" font-size="9.55" fill="#000" stroke="#000" stroke-width="0.2" text-anchor="middle" textLength="23.16" lengthAdjust="spacingAndGlyphs" xml:space="preserve">3980</text>
<line x1="1143.2" x2="1143.2" y1="210.8" y2="214.10000000000002" stroke="#000" stroke-width="0.8"/>
<text x="1143.24" y="224.00" font-family="Liberation Sans" font-size="9.55" fill="#000" stroke="#000" stroke-width="0.2" text-anchor="middle" textLength="23.16" lengthAdjust="spacingAndGlyphs" xml:space="preserve">4000</text>
<line x1="1189.9" x2="1189.9" y1="210.8" y2="214.10000000000002" stroke="#000" stroke-width="0.8"/>
<text x="1189.86" y="224.00" font-family="Liberation Sans" font-size="9.55" fill="#000" stroke="#000" stroke-width="0.2" text-anchor="middle" textLength="23.16" lengthAdjust="spacingAndGlyphs" xml:space="preserve">4020</text>
<line x1="1236.5" x2="1236.5" y1="210.8" y2="214.10000000000002" stroke="#000" stroke-width="0.8"/>
<text x="1236.48" y="224.00" font-family="Liberation Sans" font-size="9.55" fill="#000" stroke="#000" stroke-width="0.2" text-anchor="middle" textLength="23.16" lengthAdjust="spacingAndGlyphs" xml:space="preserve">4040</text>
<line x1="1283.1" x2="1283.1" y1="210.8" y2="214.10000000000002" stroke="#000" stroke-width="0.8"/>
<text x="1283.10" y="224.00" font-family="Liberation Sans" font-size="9.55" fill="#000" stroke="#000" stroke-width="0.2" text-anchor="middle" textLength="23.16" lengthAdjust="spacingAndGlyphs" xml:space="preserve">4060</text>
<line x1="1044.6000000000001" x2="1047.9" y1="204.3" y2="204.3" stroke="#000" stroke-width="0.8"/>
<text x="1042.40" y="207.70" font-family="Liberation Sans" font-size="9.55" fill="#000" stroke="#000" stroke-width="0.2" text-anchor="end" xml:space="preserve">0</text>
<line x1="1044.6000000000001" x2="1047.9" y1="182.9" y2="182.9" stroke="#000" stroke-width="0.8"/>
<text x="1042.40" y="186.27" font-family="Liberation Sans" font-size="9.55" fill="#000" stroke="#000" stroke-width="0.2" text-anchor="end" xml:space="preserve">1</text>
<line x1="1044.6000000000001" x2="1047.9" y1="161.4" y2="161.4" stroke="#000" stroke-width="0.8"/>
<text x="1042.40" y="164.84" font-family="Liberation Sans" font-size="9.55" fill="#000" stroke="#000" stroke-width="0.2" text-anchor="end" xml:space="preserve">2</text>
<line x1="1044.6000000000001" x2="1047.9" y1="140.0" y2="140.0" stroke="#000" stroke-width="0.8"/>
<text x="1042.40" y="143.41" font-family="Liberation Sans" font-size="9.55" fill="#000" stroke="#000" stroke-width="0.2" text-anchor="end" xml:space="preserve">3</text>
<line x1="1044.6000000000001" x2="1047.9" y1="118.6" y2="118.6" stroke="#000" stroke-width="0.8"/>
<text x="1042.40" y="121.98" font-family="Liberation Sans" font-size="9.55" fill="#000" stroke="#000" stroke-width="0.2" text-anchor="end" xml:space="preserve">4</text>
<line x1="1044.6000000000001" x2="1047.9" y1="97.2" y2="97.2" stroke="#000" stroke-width="0.8"/>
<text x="1042.40" y="100.55" font-family="Liberation Sans" font-size="9.55" fill="#000" stroke="#000" stroke-width="0.2" text-anchor="end" xml:space="preserve">5</text>
<line x1="1044.6000000000001" x2="1047.9" y1="75.7" y2="75.7" stroke="#000" stroke-width="0.8"/>
<text x="1042.40" y="79.12" font-family="Liberation Sans" font-size="9.55" fill="#000" stroke="#000" stroke-width="0.2" text-anchor="end" xml:space="preserve">6</text>
<text x="1049.60" y="71.00" font-family="Liberation Sans" font-size="9.03" fill="#000" stroke="#000" stroke-width="0.2" text-anchor="start" xml:space="preserve">e</text>
<text x="1055.09" y="67.60" font-family="Liberation Sans" font-size="6.30" fill="#000" stroke="#000" stroke-width="0.12" text-anchor="start" textLength="12.66" lengthAdjust="spacingAndGlyphs" xml:space="preserve">−17</text>
<text x="1068.05" y="71.00" font-family="Liberation Sans" font-size="9.03" fill="#000" stroke="#000" stroke-width="0.2" text-anchor="start" textLength="10.56" lengthAdjust="spacingAndGlyphs" xml:space="preserve">x2</text>
<text x="1078.61" y="71.00" font-family="Liberation Sans" font-size="9.03" fill="#000" stroke="#000" stroke-width="0.2" text-anchor="start" font-style="italic" xml:space="preserve">Å</text>
<text transform="translate(172.7,320.2) rotate(90)" font-family="Liberation Sans" font-size="9.6" fill="#8a2be2" textLength="17.4" lengthAdjust="spacingAndGlyphs">SiIV</text>
<path d="M171.8,348.2 q0,-2.1 1.6,-2.1 h1.2 q1.6,0 1.8,-2.1 q0.2,2.1 1.8,2.1 h1.2 q1.6,0 1.6,2.1" fill="none" stroke="#8a2be2" stroke-width="0.9"/>
<text transform="translate(261.2,323.7) rotate(90)" font-family="Liberation Sans" font-size="9.6" fill="#87ceeb" textLength="12.7" lengthAdjust="spacingAndGlyphs">OII</text>
<path d="M260.3,348.2 q0,-2.1 1.6,-2.1 h1.2 q1.6,0 1.8,-2.1 q0.2,2.1 1.8,2.1 h1.2 q1.6,0 1.6,2.1" fill="none" stroke="#87ceeb" stroke-width="0.9"/>
<text transform="translate(273.7,319.8) rotate(90)" font-family="Liberation Sans" font-size="9.6" fill="#ffa500" textLength="15.4" lengthAdjust="spacingAndGlyphs">CIV</text>
<path d="M272.8,348.2 q0,-2.1 1.6,-2.1 h1.2 q1.6,0 1.8,-2.1 q0.2,2.1 1.8,2.1 h1.2 q1.6,0 1.6,2.1" fill="none" stroke="#ffa500" stroke-width="0.9"/>
<text transform="translate(282.2,323.7) rotate(90)" font-family="Liberation Sans" font-size="9.6" fill="#87ceeb" textLength="12.7" lengthAdjust="spacingAndGlyphs">OII</text>
<path d="M281.3,348.2 q0,-2.1 1.6,-2.1 h1.2 q1.6,0 1.8,-2.1 q0.2,2.1 1.8,2.1 h1.2 q1.6,0 1.6,2.1" fill="none" stroke="#87ceeb" stroke-width="0.9"/>
<text transform="translate(453.0,319.4) rotate(90)" font-family="Liberation Sans" font-size="9.6" fill="#ff0000" textLength="13.2" lengthAdjust="spacingAndGlyphs">NV</text>
<path d="M452.1,348.2 q0,-2.1 1.6,-2.1 h1.2 q1.6,0 1.8,-2.1 q0.2,2.1 1.8,2.1 h1.2 q1.6,0 1.6,2.1" fill="none" stroke="#ff0000" stroke-width="0.9"/>
<text transform="translate(496.7,324.8) rotate(90)" font-family="Liberation Sans" font-size="9.6" fill="#ff0000" textLength="13.8" lengthAdjust="spacingAndGlyphs">SiII</text>
<path d="M495.8,348.2 q0,-2.1 1.6,-2.1 h1.2 q1.6,0 1.8,-2.1 q0.2,2.1 1.8,2.1 h1.2 q1.6,0 1.6,2.1" fill="none" stroke="#ff0000" stroke-width="0.9"/>
<text transform="translate(543.0,320.7) rotate(90)" font-family="Liberation Sans" font-size="9.6" fill="#8a2be2" textLength="18.0" lengthAdjust="spacingAndGlyphs">HeII</text>
<path d="M542.1,348.2 q0,-2.1 1.6,-2.1 h1.2 q1.6,0 1.8,-2.1 q0.2,2.1 1.8,2.1 h1.2 q1.6,0 1.6,2.1" fill="none" stroke="#8a2be2" stroke-width="0.9"/>
<text transform="translate(625.3,327.7) rotate(90)" font-family="Liberation Sans" font-size="9.6" fill="#87ceeb" textLength="12.4" lengthAdjust="spacingAndGlyphs">Hγ</text>
<path d="M624.4,348.2 q0,-2.1 1.6,-2.1 h1.2 q1.6,0 1.8,-2.1 q0.2,2.1 1.8,2.1 h1.2 q1.6,0 1.6,2.1" fill="none" stroke="#87ceeb" stroke-width="0.9"/>
<text transform="translate(649.0,327.7) rotate(90)" font-family="Liberation Sans" font-size="9.6" fill="#87ceeb" textLength="12.4" lengthAdjust="spacingAndGlyphs">Hγ</text>
<path d="M648.1,348.2 q0,-2.1 1.6,-2.1 h1.2 q1.6,0 1.8,-2.1 q0.2,2.1 1.8,2.1 h1.2 q1.6,0 1.6,2.1" fill="none" stroke="#87ceeb" stroke-width="0.9"/>
<text transform="translate(757.6,320.5) rotate(90)" font-family="Liberation Sans" font-size="9.6" fill="#ff0000" textLength="17.4" lengthAdjust="spacingAndGlyphs">SiIV</text>
<path d="M756.7,348.2 q0,-2.1 1.6,-2.1 h1.2 q1.6,0 1.8,-2.1 q0.2,2.1 1.8,2.1 h1.2 q1.6,0 1.6,2.1" fill="none" stroke="#ff0000" stroke-width="0.9"/>
<text transform="translate(791.6,327.7) rotate(90)" font-family="Liberation Sans" font-size="9.6" fill="#008000" textLength="12.4" lengthAdjust="spacingAndGlyphs">Hγ</text>
<path d="M790.7,348.2 q0,-2.1 1.6,-2.1 h1.2 q1.6,0 1.8,-2.1 q0.2,2.1 1.8,2.1 h1.2 q1.6,0 1.6,2.1" fill="none" stroke="#008000" stroke-width="0.9"/>
<text transform="translate(791.0,281.8) rotate(90)" font-family="Liberation Sans" font-size="9.6" fill="#ffa500" textLength="14.6" lengthAdjust="spacingAndGlyphs">CIII</text>
<path d="M790.1,305.0 q0,-2.1 1.6,-2.1 h1.2 q1.6,0 1.8,-2.1 q0.2,2.1 1.8,2.1 h1.2 q1.6,0 1.6,2.1" fill="none" stroke="#ffa500" stroke-width="0.9"/>
<text transform="translate(918.1,323.4) rotate(90)" font-family="Liberation Sans" font-size="9.6" fill="#800080" textLength="11.9" lengthAdjust="spacingAndGlyphs">CII</text>
<path d="M917.2,348.2 q0,-2.1 1.6,-2.1 h1.2 q1.6,0 1.8,-2.1 q0.2,2.1 1.8,2.1 h1.2 q1.6,0 1.6,2.1" fill="none" stroke="#800080" stroke-width="0.9"/>
<text transform="translate(935.3,327.7) rotate(90)" font-family="Liberation Sans" font-size="9.6" fill="#87ceeb" textLength="12.8" lengthAdjust="spacingAndGlyphs">Hβ</text>
<path d="M934.4,348.2 q0,-2.1 1.6,-2.1 h1.2 q1.6,0 1.8,-2.1 q0.2,2.1 1.8,2.1 h1.2 q1.6,0 1.6,2.1" fill="none" stroke="#87ceeb" stroke-width="0.9"/>
<text transform="translate(951.8,323.4) rotate(90)" font-family="Liberation Sans" font-size="9.6" fill="#8a2be2" textLength="14.6" lengthAdjust="spacingAndGlyphs">CIII</text>
<path d="M950.9,348.2 q0,-2.1 1.6,-2.1 h1.2 q1.6,0 1.8,-2.1 q0.2,2.1 1.8,2.1 h1.2 q1.6,0 1.6,2.1" fill="none" stroke="#8a2be2" stroke-width="0.9"/>
<text transform="translate(961.0,327.7) rotate(90)" font-family="Liberation Sans" font-size="9.6" fill="#87ceeb" textLength="12.8" lengthAdjust="spacingAndGlyphs">Hβ</text>
<path d="M960.1,348.2 q0,-2.1 1.6,-2.1 h1.2 q1.6,0 1.8,-2.1 q0.2,2.1 1.8,2.1 h1.2 q1.6,0 1.6,2.1" fill="none" stroke="#87ceeb" stroke-width="0.9"/>
<text transform="translate(993.8,323.4) rotate(90)" font-family="Liberation Sans" font-size="9.6" fill="#87ceeb" textLength="15.4" lengthAdjust="spacingAndGlyphs">OIII</text>
<path d="M992.9,348.2 q0,-2.1 1.6,-2.1 h1.2 q1.6,0 1.8,-2.1 q0.2,2.1 1.8,2.1 h1.2 q1.6,0 1.6,2.1" fill="none" stroke="#87ceeb" stroke-width="0.9"/>
<text transform="translate(1019.6,323.4) rotate(90)" font-family="Liberation Sans" font-size="9.6" fill="#87ceeb" textLength="15.4" lengthAdjust="spacingAndGlyphs">OIII</text>
<path d="M1018.7,348.2 q0,-2.1 1.6,-2.1 h1.2 q1.6,0 1.8,-2.1 q0.2,2.1 1.8,2.1 h1.2 q1.6,0 1.6,2.1" fill="none" stroke="#87ceeb" stroke-width="0.9"/>
<text transform="translate(1022.4,281.1) rotate(90)" font-family="Liberation Sans" font-size="9.6" fill="#87ceeb" textLength="15.4" lengthAdjust="spacingAndGlyphs">OIII</text>
<path d="M1021.5,305.0 q0,-2.1 1.6,-2.1 h1.2 q1.6,0 1.8,-2.1 q0.2,2.1 1.8,2.1 h1.2 q1.6,0 1.6,2.1" fill="none" stroke="#87ceeb" stroke-width="0.9"/>
<text transform="translate(1048.7,281.1) rotate(90)" font-family="Liberation Sans" font-size="9.6" fill="#87ceeb" textLength="15.4" lengthAdjust="spacingAndGlyphs">OIII</text>
<path d="M1047.8,305.0 q0,-2.1 1.6,-2.1 h1.2 q1.6,0 1.8,-2.1 q0.2,2.1 1.8,2.1 h1.2 q1.6,0 1.6,2.1" fill="none" stroke="#87ceeb" stroke-width="0.9"/>
<text transform="translate(1051.8,319.8) rotate(90)" font-family="Liberation Sans" font-size="9.6" fill="#ff0000" textLength="15.4" lengthAdjust="spacingAndGlyphs">CIV</text>
<path d="M1050.9,348.2 q0,-2.1 1.6,-2.1 h1.2 q1.6,0 1.8,-2.1 q0.2,2.1 1.8,2.1 h1.2 q1.6,0 1.6,2.1" fill="none" stroke="#ff0000" stroke-width="0.9"/>
<text transform="translate(1121.6,327.7) rotate(90)" font-family="Liberation Sans" font-size="9.6" fill="#008000" textLength="12.8" lengthAdjust="spacingAndGlyphs">Hβ</text>
<path d="M1120.7,348.2 q0,-2.1 1.6,-2.1 h1.2 q1.6,0 1.8,-2.1 q0.2,2.1 1.8,2.1 h1.2 q1.6,0 1.6,2.1" fill="none" stroke="#008000" stroke-width="0.9"/>
<text transform="translate(1188.1,281.1) rotate(90)" font-family="Liberation Sans" font-size="9.6" fill="#ff00ff" textLength="12.7" lengthAdjust="spacingAndGlyphs">OII</text>
<path d="M1187.2,305.0 q0,-2.1 1.6,-2.1 h1.2 q1.6,0 1.8,-2.1 q0.2,2.1 1.8,2.1 h1.2 q1.6,0 1.6,2.1" fill="none" stroke="#ff00ff" stroke-width="0.9"/>
<text transform="translate(1183.8,323.4) rotate(90)" font-family="Liberation Sans" font-size="9.6" fill="#008000" textLength="15.4" lengthAdjust="spacingAndGlyphs">OIII</text>
<path d="M1182.9,348.2 q0,-2.1 1.6,-2.1 h1.2 q1.6,0 1.8,-2.1 q0.2,2.1 1.8,2.1 h1.2 q1.6,0 1.6,2.1" fill="none" stroke="#008000" stroke-width="0.9"/>
<text transform="translate(1213.8,323.4) rotate(90)" font-family="Liberation Sans" font-size="9.6" fill="#008000" textLength="15.4" lengthAdjust="spacingAndGlyphs">OIII</text>
<path d="M1212.9,348.2 q0,-2.1 1.6,-2.1 h1.2 q1.6,0 1.8,-2.1 q0.2,2.1 1.8,2.1 h1.2 q1.6,0 1.6,2.1" fill="none" stroke="#008000" stroke-width="0.9"/>
<text transform="translate(1229.0,320.7) rotate(90)" font-family="Liberation Sans" font-size="9.6" fill="#ff0000" textLength="18.0" lengthAdjust="spacingAndGlyphs">HeII</text>
<path d="M1228.1,348.2 q0,-2.1 1.6,-2.1 h1.2 q1.6,0 1.8,-2.1 q0.2,2.1 1.8,2.1 h1.2 q1.6,0 1.6,2.1" fill="none" stroke="#ff0000" stroke-width="0.9"/>
<clipPath id="sclip"><rect x="101.25" y="348.3" width="1198.25" height="84.19999999999999"/></clipPath>
<rect x="101.25" y="348.3" width="1198.25" height="84.19999999999999" fill="#fff"/>
<g clip-path="url(#sclip)">
<rect x="379.5" y="348.3" width="54.4" height="84.19999999999999" fill="#c6c20a"/>
<path d="M101.0,432.5 L101.0,399.2 L102.1,399.8 L103.3,400.1 L104.5,400.7 L105.7,400.6 L106.9,400.2 L108.0,399.7 L109.2,399.6 L110.4,399.4 L111.6,400.0 L112.7,400.1 L113.9,400.6 L115.1,400.9 L116.3,401.2 L117.4,401.5 L118.6,401.3 L119.8,401.7 L121.0,402.0 L122.1,402.3 L123.3,402.9 L124.5,403.1 L125.7,403.2 L126.9,403.5 L128.0,403.7 L129.2,403.6 L130.4,403.9 L131.6,403.5 L132.7,403.4 L133.9,403.4 L135.1,403.9 L136.3,404.0 L137.4,404.5 L138.6,404.3 L139.8,404.6 L141.0,405.0 L142.1,405.3 L143.3,405.2 L144.5,405.6 L145.7,405.6 L146.9,405.8 L148.0,406.2 L149.2,406.4 L150.4,406.4 L151.6,406.6 L152.7,406.9 L153.9,407.0 L155.1,406.8 L156.3,407.4 L157.4,407.5 L158.6,407.3 L159.8,407.6 L161.0,407.5 L162.1,407.6 L163.3,407.8 L164.5,407.5 L165.7,408.1 L166.9,408.1 L168.0,408.3 L169.2,408.1 L170.4,408.1 L171.6,407.9 L172.7,407.5 L173.9,407.5 L175.1,407.2 L176.3,407.3 L177.4,408.0 L178.6,408.4 L179.8,408.5 L181.0,408.5 L182.1,408.8 L183.3,409.1 L184.5,409.2 L185.7,409.4 L186.9,409.4 L188.0,409.8 L189.2,409.6 L190.4,409.6 L191.6,409.7 L192.7,410.0 L193.9,409.8 L195.1,410.2 L196.3,410.0 L197.4,409.5 L198.6,409.5 L199.8,409.8 L201.0,409.7 L202.1,410.0 L203.3,410.0 L204.5,410.5 L205.7,410.7 L206.9,410.7 L208.0,411.0 L209.2,411.0 L210.4,410.8 L211.6,411.1 L212.7,411.3 L213.9,411.2 L215.1,411.1 L216.3,410.7 L217.4,410.9 L218.6,410.9 L219.8,410.9 L221.0,410.4 L222.2,410.6 L223.3,410.7 L224.5,410.7 L225.7,410.7 L226.9,410.5 L228.0,410.2 L229.2,410.4 L230.4,410.4 L231.6,410.2 L232.7,410.5 L233.9,410.2 L235.1,410.8 L236.3,410.7 L237.4,410.7 L238.6,411.0 L239.8,410.8 L241.0,411.1 L242.2,411.3 L243.3,411.3 L244.5,411.5 L245.7,411.4 L246.9,411.5 L248.0,411.2 L249.2,411.3 L250.4,411.5 L251.6,411.8 L252.7,411.8 L253.9,412.0 L255.1,412.1 L256.3,412.2 L257.4,412.0 L258.6,412.5 L259.8,412.7 L261.0,412.3 L262.2,412.5 L263.3,412.2 L264.5,412.6 L265.7,412.3 L266.9,412.4 L268.0,412.4 L269.2,412.4 L270.4,412.6 L271.6,412.9 L272.7,413.0 L273.9,412.7 L275.1,412.8 L276.3,412.9 L277.4,413.3 L278.6,413.2 L279.8,413.2 L281.0,413.4 L282.2,413.3 L283.3,413.4 L284.5,413.3 L285.7,413.2 L286.9,413.5 L288.0,413.0 L289.2,413.0 L290.4,413.5 L291.6,412.9 L292.7,412.9 L293.9,413.0 L295.1,413.4 L296.3,412.8 L297.4,413.2 L298.6,412.7 L299.8,413.0 L301.0,413.4 L302.2,413.5 L303.3,413.3 L304.5,413.4 L305.7,413.4 L306.9,413.4 L308.0,413.9 L309.2,414.2 L310.4,413.7 L311.6,414.3 L312.7,413.9 L313.9,414.5 L315.1,414.2 L316.3,414.3 L317.4,414.3 L318.6,414.6 L319.8,414.5 L321.0,415.0 L322.2,414.8 L323.3,415.1 L324.5,414.9 L325.7,415.1 L326.9,415.3 L328.0,415.4 L329.2,415.7 L330.4,415.7 L331.6,415.3 L332.7,415.4 L333.9,415.2 L335.1,415.3 L336.3,415.6 L337.4,415.5 L338.6,415.2 L339.8,415.4 L341.0,415.6 L342.2,415.1 L343.3,415.0 L344.5,415.4 L345.7,415.1 L346.9,415.1 L348.0,414.8 L349.2,415.1 L350.4,415.4 L351.6,415.4 L352.7,415.3 L353.9,416.0 L355.1,416.2 L356.3,416.1 L357.4,416.1 L358.6,416.4 L359.8,416.5 L361.0,416.3 L362.2,416.4 L363.3,416.8 L364.5,416.4 L365.7,416.9 L366.9,416.9 L368.0,416.6 L369.2,416.9 L370.4,416.6 L371.6,417.0 L372.7,416.5 L373.9,416.9 L375.1,416.9 L376.3,416.7 L377.4,416.7 L378.6,416.6 L379.8,416.3 L381.0,416.4 L382.2,416.8 L383.3,416.6 L384.5,416.4 L385.7,416.4 L386.9,416.2 L388.0,416.4 L389.2,416.6 L390.4,416.6 L391.6,416.2 L392.7,416.5 L393.9,416.3 L395.1,416.2 L396.3,416.4 L397.4,416.4 L398.6,416.5 L399.8,416.7 L401.0,416.3 L402.2,416.5 L403.3,416.3 L404.5,416.6 L405.7,416.3 L406.9,416.3 L408.0,416.4 L409.2,416.5 L410.4,416.7 L411.6,416.3 L412.7,416.5 L413.9,416.4 L415.1,416.7 L416.3,416.7 L417.4,416.6 L418.6,416.2 L419.8,416.6 L421.0,416.2 L422.2,416.5 L423.3,416.3 L424.5,416.5 L425.7,416.3 L426.9,416.6 L428.0,416.4 L429.2,416.1 L430.4,416.6 L431.6,416.3 L432.7,416.5 L433.9,416.5 L435.1,416.7 L436.3,416.7 L437.4,416.2 L438.6,416.2 L439.8,416.3 L441.0,416.3 L442.2,416.2 L443.3,416.7 L444.5,416.4 L445.7,416.5 L446.9,416.4 L448.0,416.2 L449.2,416.3 L450.4,416.2 L451.6,416.7 L452.7,416.4 L453.9,416.4 L455.1,416.4 L456.3,416.5 L457.5,416.4 L458.6,416.7 L459.8,416.3 L461.0,416.6 L462.2,416.5 L463.3,416.3 L464.5,416.4 L465.7,416.6 L466.9,416.7 L468.0,416.6 L469.2,416.4 L470.4,416.2 L471.6,416.3 L472.7,416.5 L473.9,416.5 L475.1,416.3 L476.3,416.6 L477.5,416.5 L478.6,416.7 L479.8,416.6 L481.0,416.4 L482.2,416.3 L483.3,416.4 L484.5,416.5 L485.7,416.2 L486.9,416.3 L488.0,416.6 L489.2,416.7 L490.4,416.1 L491.6,416.1 L492.7,416.1 L493.9,416.3 L495.1,416.5 L496.3,416.6 L497.5,416.5 L498.6,416.5 L499.8,416.1 L501.0,416.2 L502.2,416.3 L503.3,416.6 L504.5,416.6 L505.7,416.6 L506.9,416.2 L508.0,416.7 L509.2,416.4 L510.4,416.4 L511.6,416.5 L512.7,416.3 L513.9,416.7 L515.1,416.6 L516.3,416.8 L517.5,416.9 L518.6,417.0 L519.8,416.8 L521.0,416.9 L522.2,417.0 L523.3,416.5 L524.5,416.9 L525.7,416.6 L526.9,416.7 L528.0,416.7 L529.2,416.8 L530.4,416.6 L531.6,416.7 L532.7,416.8 L533.9,416.9 L535.1,416.8 L536.3,416.8 L537.5,417.0 L538.6,417.0 L539.8,417.2 L541.0,416.9 L542.2,417.1 L543.3,417.3 L544.5,417.3 L545.7,416.9 L546.9,417.3 L548.0,417.2 L549.2,417.0 L550.4,416.9 L551.6,417.2 L552.7,417.2 L553.9,417.2 L555.1,417.4 L556.3,416.9 L557.5,417.4 L558.6,416.9 L559.8,417.4 L561.0,417.4 L562.2,417.0 L563.3,417.0 L564.5,417.3 L565.7,417.1 L566.9,417.2 L568.0,417.1 L569.2,417.4 L570.4,417.0 L571.6,416.9 L572.7,417.1 L573.9,416.9 L575.1,416.9 L576.3,417.3 L577.5,417.0 L578.6,417.0 L579.8,417.2 L581.0,417.4 L582.2,417.1 L583.3,417.0 L584.5,417.3 L585.7,417.1 L586.9,417.0 L588.0,417.2 L589.2,417.5 L590.4,417.1 L591.6,417.4 L592.7,417.0 L593.9,417.1 L595.1,417.3 L596.3,417.0 L597.5,417.2 L598.6,417.3 L599.8,417.1 L601.0,417.0 L602.2,417.0 L603.3,417.0 L604.5,417.2 L605.7,417.1 L606.9,417.2 L608.0,417.2 L609.2,417.0 L610.4,417.4 L611.6,417.5 L612.7,417.2 L613.9,417.3 L615.1,417.3 L616.3,417.2 L617.5,417.4 L618.6,417.5 L619.8,417.5 L621.0,417.1 L622.2,417.1 L623.3,417.2 L624.5,417.5 L625.7,417.0 L626.9,417.1 L628.0,417.3 L629.2,417.6 L630.4,417.1 L631.6,417.2 L632.7,417.2 L633.9,417.6 L635.1,417.2 L636.3,417.6 L637.5,417.3 L638.6,417.5 L639.8,417.4 L641.0,417.1 L642.2,417.2 L643.3,417.2 L644.5,417.5 L645.7,417.4 L646.9,417.3 L648.0,417.6 L649.2,417.4 L650.4,417.1 L651.6,417.2 L652.7,417.2 L653.9,417.5 L655.1,417.3 L656.3,417.2 L657.5,417.3 L658.6,417.4 L659.8,417.6 L661.0,417.7 L662.2,417.2 L663.3,417.2 L664.5,417.5 L665.7,417.3 L666.9,417.5 L668.0,417.4 L669.2,417.2 L670.4,417.5 L671.6,417.4 L672.7,417.6 L673.9,417.4 L675.1,417.7 L676.3,417.6 L677.5,417.6 L678.6,417.2 L679.8,417.7 L681.0,417.3 L682.2,417.7 L683.3,417.2 L684.5,417.7 L685.7,417.7 L686.9,417.7 L688.0,417.2 L689.2,417.4 L690.4,417.3 L691.6,417.5 L692.8,417.7 L693.9,417.6 L695.1,417.5 L696.3,417.2 L697.5,417.7 L698.6,417.7 L699.8,417.3 L701.0,417.8 L702.2,417.3 L703.3,417.7 L704.5,417.5 L705.7,417.5 L706.9,417.3 L708.0,417.8 L709.2,417.4 L710.4,417.7 L711.6,417.4 L712.8,417.8 L713.9,417.4 L715.1,417.8 L716.3,417.7 L717.5,417.8 L718.6,417.7 L719.8,417.7 L721.0,417.3 L722.2,417.5 L723.3,417.7 L724.5,417.3 L725.7,417.8 L726.9,417.8 L728.0,417.3 L729.2,417.3 L730.4,417.5 L731.6,417.3 L732.8,417.9 L733.9,417.4 L735.1,417.5 L736.3,417.5 L737.5,417.4 L738.6,417.9 L739.8,417.8 L741.0,417.8 L742.2,417.6 L743.3,417.6 L744.5,417.6 L745.7,417.7 L746.9,417.5 L748.0,417.5 L749.2,417.5 L750.4,417.9 L751.6,417.9 L752.8,417.8 L753.9,417.8 L755.1,417.6 L756.3,417.8 L757.5,417.6 L758.6,417.8 L759.8,417.8 L761.0,417.6 L762.2,417.4 L763.3,417.9 L764.5,417.8 L765.7,417.4 L766.9,417.9 L768.0,418.0 L769.2,417.9 L770.4,417.5 L771.6,417.6 L772.8,417.5 L773.9,417.7 L775.1,418.0 L776.3,417.8 L777.5,417.6 L778.6,417.8 L779.8,417.9 L781.0,417.8 L782.2,417.8 L783.3,417.8 L784.5,417.8 L785.7,417.9 L786.9,418.0 L788.0,417.6 L789.2,417.6 L790.4,417.8 L791.6,418.0 L792.8,417.9 L793.9,417.7 L795.1,417.5 L796.3,417.8 L797.5,417.5 L798.6,417.8 L799.8,418.0 L801.0,417.7 L802.2,417.7 L803.3,417.7 L804.5,417.7 L805.7,418.1 L806.9,417.8 L808.0,417.6 L809.2,418.0 L810.4,418.1 L811.6,418.0 L812.8,417.9 L813.9,417.8 L815.1,417.9 L816.3,417.7 L817.5,418.0 L818.6,417.9 L819.8,417.7 L821.0,417.8 L822.2,417.6 L823.3,417.6 L824.5,418.0 L825.7,417.9 L826.9,417.8 L828.0,417.8 L829.2,417.9 L830.4,417.7 L831.6,418.0 L832.8,417.9 L833.9,418.1 L835.1,417.7 L836.3,417.8 L837.5,417.6 L838.6,418.1 L839.8,417.8 L841.0,417.8 L842.2,418.2 L843.3,417.7 L844.5,417.7 L845.7,418.2 L846.9,417.7 L848.0,417.8 L849.2,417.9 L850.4,417.9 L851.6,418.1 L852.8,418.2 L853.9,418.0 L855.1,417.7 L856.3,418.1 L857.5,418.0 L858.6,418.1 L859.8,417.9 L861.0,417.7 L862.2,417.7 L863.3,418.1 L864.5,418.0 L865.7,418.3 L866.9,418.0 L868.0,417.8 L869.2,417.8 L870.4,418.2 L871.6,418.0 L872.8,418.2 L873.9,418.1 L875.1,417.8 L876.3,418.1 L877.5,417.8 L878.6,417.8 L879.8,417.8 L881.0,418.2 L882.2,417.8 L883.3,417.8 L884.5,417.8 L885.7,418.3 L886.9,418.3 L888.0,418.2 L889.2,418.0 L890.4,418.1 L891.6,418.3 L892.8,418.0 L893.9,418.0 L895.1,418.0 L896.3,418.1 L897.5,418.1 L898.6,418.0 L899.8,418.4 L901.0,418.2 L902.2,418.3 L903.3,418.4 L904.5,418.0 L905.7,418.3 L906.9,418.3 L908.0,418.3 L909.2,418.2 L910.4,418.4 L911.6,418.1 L912.8,418.5 L913.9,418.0 L915.1,418.5 L916.3,418.1 L917.5,418.3 L918.6,418.3 L919.8,418.4 L921.0,418.4 L922.2,418.2 L923.3,418.3 L924.5,418.3 L925.7,418.5 L926.9,418.3 L928.1,418.6 L929.2,418.4 L930.4,418.3 L931.6,418.4 L932.8,418.4 L933.9,418.4 L935.1,418.7 L936.3,418.3 L937.5,418.6 L938.6,417.4 L939.8,417.2 L941.0,417.5 L942.2,417.6 L943.3,417.6 L944.5,417.6 L945.7,417.6 L946.9,417.6 L948.1,417.7 L949.2,417.5 L950.4,417.6 L951.6,417.6 L952.8,417.4 L953.9,417.6 L955.1,417.3 L956.3,417.3 L957.5,417.6 L958.6,417.3 L959.8,417.7 L961.0,417.7 L962.2,417.2 L963.3,417.8 L964.5,417.8 L965.7,417.3 L966.9,417.8 L968.1,417.4 L969.2,417.5 L970.4,417.7 L971.6,417.7 L972.8,417.2 L973.9,417.6 L975.1,417.7 L976.3,417.5 L977.5,417.4 L978.6,417.6 L979.8,417.7 L981.0,417.3 L982.2,417.7 L983.3,417.8 L984.5,417.8 L985.7,417.2 L986.9,417.5 L988.1,417.4 L989.2,417.5 L990.4,417.2 L991.6,417.6 L992.8,417.6 L993.9,417.4 L995.1,417.8 L996.3,417.6 L997.5,417.3 L998.6,417.4 L999.8,417.5 L1001.0,417.2 L1002.2,417.5 L1003.3,417.3 L1004.5,417.5 L1005.7,417.7 L1006.9,417.5 L1008.1,417.6 L1009.2,417.7 L1010.4,417.6 L1011.6,417.6 L1012.8,417.5 L1013.9,417.3 L1015.1,417.3 L1016.3,417.2 L1017.5,417.5 L1018.6,417.3 L1019.8,417.2 L1021.0,417.5 L1022.2,417.2 L1023.3,417.6 L1024.5,417.1 L1025.7,417.2 L1026.9,417.1 L1028.1,417.2 L1029.2,417.3 L1030.4,417.4 L1031.6,417.2 L1032.8,417.1 L1033.9,417.3 L1035.1,417.3 L1036.3,417.1 L1037.5,417.5 L1038.6,417.4 L1039.8,417.6 L1041.0,417.1 L1042.2,417.3 L1043.3,417.2 L1044.5,417.5 L1045.7,417.5 L1046.9,417.3 L1048.1,417.1 L1049.2,417.4 L1050.4,417.3 L1051.6,417.3 L1052.8,417.1 L1053.9,417.5 L1055.1,417.1 L1056.3,417.6 L1057.5,417.2 L1058.6,417.1 L1059.8,417.3 L1061.0,417.1 L1062.2,417.4 L1063.3,417.5 L1064.5,417.3 L1065.7,417.4 L1066.9,417.1 L1068.1,417.2 L1069.2,417.1 L1070.4,417.0 L1071.6,417.1 L1072.8,417.1 L1073.9,416.9 L1075.1,417.0 L1076.3,417.1 L1077.5,417.3 L1078.6,417.2 L1079.8,417.0 L1081.0,417.0 L1082.2,417.0 L1083.3,417.0 L1084.5,417.1 L1085.7,417.3 L1086.9,417.1 L1088.1,417.3 L1089.2,417.1 L1090.4,417.3 L1091.6,417.4 L1092.8,416.9 L1093.9,416.9 L1095.1,417.3 L1096.3,417.4 L1097.5,416.9 L1098.6,417.0 L1099.8,417.2 L1101.0,416.6 L1102.2,416.4 L1103.3,416.1 L1104.5,415.5 L1105.7,416.4 L1106.9,416.9 L1108.1,416.8 L1109.2,416.8 L1110.4,417.0 L1111.6,417.3 L1112.8,417.0 L1113.9,417.4 L1115.1,417.1 L1116.3,417.3 L1117.5,417.4 L1118.6,417.3 L1119.8,417.0 L1121.0,417.3 L1122.2,417.4 L1123.3,417.1 L1124.5,417.2 L1125.7,417.1 L1126.9,417.1 L1128.1,417.0 L1129.2,416.9 L1130.4,417.2 L1131.6,417.1 L1132.8,417.3 L1133.9,417.3 L1135.1,417.4 L1136.3,416.9 L1137.5,417.2 L1138.6,417.0 L1139.8,416.9 L1141.0,417.2 L1142.2,417.3 L1143.3,417.3 L1144.5,417.1 L1145.7,417.2 L1146.9,417.4 L1148.1,416.9 L1149.2,417.0 L1150.4,416.9 L1151.6,416.9 L1152.8,417.0 L1153.9,416.9 L1155.1,417.0 L1156.3,417.2 L1157.5,416.9 L1158.6,416.9 L1159.8,417.4 L1161.0,417.3 L1162.2,417.3 L1163.4,417.2 L1164.5,416.9 L1165.7,417.1 L1166.9,416.9 L1168.1,417.2 L1169.2,417.1 L1170.4,417.2 L1171.6,417.0 L1172.8,417.2 L1173.9,417.4 L1175.1,417.1 L1176.3,417.0 L1177.5,416.8 L1178.6,417.2 L1179.8,416.8 L1181.0,416.9 L1182.2,417.2 L1183.4,416.9 L1184.5,416.8 L1185.7,416.8 L1186.9,416.9 L1188.1,417.1 L1189.2,417.0 L1190.4,416.9 L1191.6,416.9 L1192.8,417.2 L1193.9,416.8 L1195.1,416.9 L1196.3,417.2 L1197.5,417.1 L1198.6,417.2 L1199.8,417.0 L1201.0,417.2 L1202.2,416.9 L1203.4,417.1 L1204.5,416.7 L1205.7,416.8 L1206.9,417.1 L1208.1,416.7 L1209.2,416.9 L1210.4,417.0 L1211.6,416.7 L1212.8,417.2 L1213.9,416.9 L1215.1,416.8 L1216.3,417.1 L1217.5,416.9 L1218.6,416.6 L1219.8,416.9 L1221.0,416.7 L1222.2,417.0 L1223.4,416.6 L1224.5,416.6 L1225.7,417.0 L1226.9,416.7 L1228.1,416.9 L1229.2,417.1 L1230.4,417.0 L1231.6,416.7 L1232.8,416.8 L1233.9,416.8 L1235.1,417.0 L1236.3,416.9 L1237.5,416.8 L1238.6,416.7 L1239.8,416.5 L1241.0,416.8 L1242.2,416.8 L1243.4,416.5 L1244.5,416.6 L1245.7,416.5 L1246.9,416.5 L1248.1,416.7 L1249.2,416.8 L1250.4,416.9 L1251.6,416.6 L1252.8,416.5 L1253.9,416.4 L1255.1,416.4 L1256.3,416.6 L1257.5,416.6 L1258.6,416.3 L1259.8,416.8 L1261.0,416.7 L1262.2,416.6 L1263.4,416.5 L1264.5,416.5 L1265.7,416.8 L1266.9,416.6 L1268.1,416.7 L1269.2,416.6 L1270.4,416.8 L1271.6,416.7 L1272.8,416.5 L1273.9,416.7 L1275.1,416.8 L1276.3,416.7 L1277.5,416.6 L1278.6,416.8 L1279.8,416.8 L1281.0,416.7 L1282.2,416.6 L1283.4,417.0 L1284.5,416.7 L1285.7,417.2 L1286.9,417.1 L1288.1,417.2 L1289.2,417.7 L1290.4,418.4 L1291.6,419.0 L1292.8,421.0 L1293.9,424.3 L1294.2,426.9 L1293.6,429.3 L1292.2,431.3 L1289.2,432.5 L1289.2,432.5 Z" fill="#808080" fill-opacity="0.5"/>
<line x1="101.25" x2="1299.5" y1="425.0" y2="425.0" stroke="#505050" stroke-opacity="0.75" stroke-width="1.1"/>
<line x1="407.0" x2="407.0" y1="348.3" y2="432.5" stroke="#222" stroke-width="1" stroke-dasharray="2.4,1.4"/>
<line x1="937.0" x2="937.0" y1="348.3" y2="432.5" stroke="#555" stroke-width="1.1" stroke-dasharray="4.2,2"/>
<clipPath id="hc0"><rect x="125.2" y="348.3" width="11.8" height="84.19999999999999"/></clipPath>
<rect x="125.2" y="348.3" width="11.8" height="84.19999999999999" fill="#808080" fill-opacity="0.72"/>
<g clip-path="url(#hc0)" stroke="#000" stroke-width="1"><line x1="123.2" y1="325.7" x2="139.0" y2="309.9"/><line x1="123.2" y1="349.7" x2="139.0" y2="333.9"/><line x1="123.2" y1="373.7" x2="139.0" y2="357.9"/><line x1="123.2" y1="397.8" x2="139.0" y2="382.0"/><line x1="123.2" y1="421.2" x2="139.0" y2="405.4"/><line x1="123.2" y1="445.2" x2="139.0" y2="429.4"/></g>
<line x1="125.2" x2="125.2" y1="348.3" y2="432.5" stroke="#222" stroke-width="1.1"/><line x1="137.0" x2="137.0" y1="348.3" y2="432.5" stroke="#222" stroke-width="1.1"/>
<clipPath id="hc1"><rect x="1255.5" y="348.3" width="6.3" height="84.19999999999999"/></clipPath>
<rect x="1255.5" y="348.3" width="6.3" height="84.19999999999999" fill="#808080" fill-opacity="0.72"/>
<g clip-path="url(#hc1)" stroke="#000" stroke-width="1"><line x1="1253.5" y1="340.6" x2="1263.8" y2="330.3"/><line x1="1253.5" y1="364.6" x2="1263.8" y2="354.3"/><line x1="1253.5" y1="388.6" x2="1263.8" y2="378.3"/><line x1="1253.5" y1="412.6" x2="1263.8" y2="402.3"/><line x1="1253.5" y1="436.6" x2="1263.8" y2="426.3"/><line x1="1253.5" y1="460.6" x2="1263.8" y2="450.3"/></g>
<line x1="1255.5" x2="1255.5" y1="348.3" y2="432.5" stroke="#222" stroke-width="1.1"/><line x1="1261.8" x2="1261.8" y1="348.3" y2="432.5" stroke="#222" stroke-width="1.1"/>
<polyline points="101.5,406.1 103.2,401.4 105.5,410.3 106.9,419.7 108.1,385.1 109.7,405.0 110.7,414.0 111.8,413.4 114.9,365.2 116.5,374.6 118.3,398.7 118.9,384.1 120.0,404.5 122.1,398.7 125.4,395.1 127.0,412.4 128.8,385.1 130.5,375.1 131.7,398.7 134.0,425.0 135.4,392.4 136.4,383.0 137.5,389.3 138.8,386.2 140.1,404.0 141.2,390.4 143.3,384.6 144.5,412.4 145.9,384.6 147.4,392.4 149.3,410.3 151.6,387.2 152.7,408.2 155.8,389.3 158.3,384.1 159.8,417.6 161.3,400.8 163.7,409.8 165.5,382.0 166.9,378.3 168.4,390.4 171.8,407.1 174.2,388.8 175.8,391.4 177.7,420.2 179.8,370.4 181.2,375.7 182.6,408.7 185.4,373.6 187.3,388.8 188.9,388.8 190.5,415.0 192.6,387.7 195.2,428.6 198.3,394.5 199.6,382.0 202.0,399.8 203.6,386.2 205.4,383.0 207.8,391.4 209.9,392.4 212.5,411.3 214.6,384.1 217.0,405.0 219.0,393.8 222.0,407.5 223.8,390.0 225.5,383.8 228.0,375.0 230.0,390.0 231.8,372.5 234.2,391.2 235.8,380.0 238.2,400.0 240.5,378.8 244.2,373.8 246.2,396.2 248.0,386.2 250.0,398.8 252.5,390.0 254.5,395.0 257.0,377.5 258.8,391.2 261.2,388.8 263.2,392.5 265.5,380.0 267.5,405.0 270.0,406.2 272.0,398.8 273.8,405.0 277.0,378.8 279.5,390.0 281.2,393.8 283.2,386.2 286.2,400.0 288.2,387.5 290.5,388.8 292.5,375.0 294.5,383.8 297.0,370.0 299.5,397.5 302.0,390.0 304.5,392.5 307.5,375.0 309.5,395.0 312.5,376.2 315.0,387.5 317.5,378.8 320.0,388.8 322.5,402.5 324.5,387.5 327.0,386.2 329.5,398.8 332.5,388.8 335.0,383.8 337.5,376.2 340.0,380.0 342.0,377.5 344.5,381.2 347.5,380.0 351.2,383.8 353.8,371.2 356.2,381.2 358.0,378.8 360.0,401.2 363.0,385.0 365.0,378.8 367.0,397.5 369.5,380.0 372.5,377.5 375.5,382.5 377.5,386.2 380.0,395.0 381.2,382.5 385.0,406.2 386.2,405.0 389.5,390.0 392.5,380.0 395.0,388.8 397.5,377.5 399.5,388.8 402.0,398.8 404.5,393.8 407.5,405.0 409.5,397.5 411.2,388.8 413.0,395.0 415.0,381.2 417.0,370.0 418.8,371.2 420.8,376.2 422.5,373.8 425.0,375.0 427.0,386.2 428.8,378.8 431.2,380.0 433.0,378.8 434.5,372.5 436.5,383.8 438.0,373.8 440.0,378.8 442.5,380.0 445.0,373.8 447.5,368.8 449.5,376.2 451.2,377.5 453.8,372.5 456.2,367.5 457.5,376.2 459.2,368.8 461.2,381.2 463.0,378.8 465.5,371.2 468.0,376.2 469.5,382.5 471.2,375.0 473.8,371.2 475.0,373.8 477.0,367.5 478.5,358.8 480.0,377.5 481.0,390.0 482.5,386.2 483.8,388.8 485.5,381.2 487.0,375.0 488.5,373.8 490.2,390.0 491.8,373.8 493.8,370.0 495.0,373.8 497.0,378.8 498.8,375.0 500.5,372.5 502.5,377.5 505.0,371.2 507.0,380.0 508.8,383.8 510.0,380.0 511.8,397.5 513.2,382.5 515.0,375.0 517.0,376.2 518.8,383.8 520.5,371.2 522.0,373.8 523.2,363.8 524.5,377.5 526.2,378.8 528.8,376.2 531.2,378.8 532.5,370.0 534.5,378.8 536.2,380.0 538.0,373.8 540.0,381.2 542.0,375.0 543.8,371.2 545.5,381.2 548.0,367.5 549.5,376.2 551.2,377.5 553.8,367.5 556.2,370.0 558.0,378.8 560.0,388.8 561.2,380.0 563.0,370.0 565.0,367.5 567.0,381.2 568.8,381.2 570.5,376.2 572.0,383.8 573.8,375.0 575.5,381.2 577.5,373.8 579.5,382.5 581.2,376.2 583.0,372.5 585.0,382.5 587.0,378.8 588.8,380.0 591.2,377.5 593.8,378.8 595.8,380.0 597.5,390.0 599.2,375.0 601.2,383.8 603.0,381.2 604.5,391.2 606.2,378.8 608.0,390.0 610.0,386.2 612.0,381.2 613.8,375.0 615.5,377.5 617.5,372.5 619.5,376.2 621.2,375.0 623.0,378.8 625.0,376.2 627.0,391.2 628.8,381.2 630.0,376.2 632.5,376.2 635.5,373.8 637.5,366.2 639.5,370.0 641.2,377.5 643.8,371.2 645.8,376.2 648.0,368.8 650.0,372.5 652.0,377.5 655.0,375.0 657.5,372.5 660.0,376.2 662.0,373.8 664.5,381.2 667.0,372.5 668.8,377.5 671.2,373.8 673.8,365.0 675.5,371.2 678.0,367.5 680.0,373.8 682.5,371.2 684.5,377.5 687.5,375.0 690.5,380.0 692.0,376.2 693.8,365.0 696.2,372.5 698.8,370.0 701.2,368.8 703.8,373.8 706.2,376.2 708.0,366.2 710.0,375.0 712.5,377.5 715.0,371.2 717.5,376.2 719.5,375.0 720.0,376.2 722.0,372.5 724.5,367.5 726.2,361.2 728.0,370.0 730.0,361.2 732.5,368.8 735.0,371.2 737.5,376.2 739.5,370.0 741.2,375.0 743.0,368.8 745.0,375.0 748.0,372.5 750.5,368.8 752.5,362.5 754.5,370.0 756.2,363.8 758.8,370.0 760.8,380.0 762.5,371.2 764.5,370.0 766.2,366.2 768.0,361.2 770.0,377.5 772.0,367.5 774.5,368.8 777.0,370.0 779.5,367.5 781.2,362.5 783.0,367.5 785.0,370.0 787.0,378.8 788.8,373.8 790.5,376.2 792.5,368.8 794.2,377.5 796.2,367.5 798.0,376.2 799.5,371.2 800.8,388.8 802.5,365.0 804.5,368.8 806.2,365.0 808.0,370.0 810.0,363.8 811.8,360.0 813.8,370.0 815.5,362.5 817.5,371.2 819.5,366.2 821.2,375.0 823.0,370.0 825.0,367.5 827.0,368.8 828.8,365.0 830.5,357.5 831.8,352.5 833.8,362.5 835.5,370.0 837.5,366.2 839.5,367.5 841.2,370.0 843.0,368.8 845.0,370.0 847.0,360.0 848.8,372.5 850.8,365.0 853.0,363.8 855.0,362.5 857.0,367.5 858.8,376.2 860.5,367.5 862.0,361.2 863.8,371.2 865.5,366.2 867.5,370.0 869.5,363.8 871.2,375.0 873.0,363.8 875.0,362.5 877.0,372.5 878.8,362.5 880.5,373.8 882.5,363.8 884.5,368.8 886.2,362.5 888.0,377.5 890.0,367.5 892.0,365.0 893.8,368.8 895.5,358.8 897.5,373.8 899.5,366.2 901.2,361.2 903.0,368.8 905.0,361.2 907.0,370.0 908.8,361.2 910.5,367.5 912.5,365.0 914.5,368.8 916.2,362.5 918.0,358.0 920.0,366.2 922.0,359.5 923.8,366.2 925.5,365.0 927.5,368.8 929.5,366.2 931.2,372.5 933.0,371.2 935.0,378.8 937.5,385.0 939.5,376.2 941.2,370.0 943.8,371.2 946.2,367.5 948.8,365.0 950.8,368.8 952.5,363.8 955.0,361.2 957.0,368.8 958.8,363.8 960.5,370.0 962.0,380.0 963.8,372.5 965.5,370.0 967.5,368.8 969.5,363.8 971.2,370.0 973.0,365.0 975.0,367.5 977.0,363.8 978.8,367.5 980.5,370.0 982.0,380.0 983.8,370.0 985.5,367.5 987.5,360.0 989.5,362.5 991.2,360.0 993.0,367.5 995.0,371.2 997.0,366.2 998.8,370.0 1000.8,367.5 1003.0,365.0 1005.0,358.8 1007.0,367.5 1008.8,371.2 1010.5,368.8 1012.5,363.8 1014.5,370.0 1016.2,361.2 1018.0,367.5 1020.0,375.0 1022.0,362.5 1023.8,361.2 1025.5,365.0 1027.0,376.2 1028.8,367.5 1030.5,370.0 1032.5,362.5 1035.0,356.2 1036.8,362.5 1038.8,361.2 1040.5,365.0 1042.0,358.8 1043.8,367.5 1045.5,370.0 1047.5,368.8 1049.5,371.2 1052.0,360.0 1053.8,370.0 1055.5,373.8 1057.5,360.0 1059.5,358.8 1061.2,371.2 1063.0,361.2 1065.0,373.8 1067.0,382.5 1068.8,373.8 1070.5,361.2 1072.5,360.0 1074.5,362.5 1076.2,373.8 1078.0,366.2 1080.0,352.5 1082.0,367.5 1083.8,371.2 1085.5,365.0 1087.5,367.5 1089.5,356.2 1091.2,361.2 1093.0,358.8 1095.0,370.0 1097.0,377.5 1098.8,368.8 1100.5,371.2 1102.5,368.8 1104.5,370.0 1106.2,367.5 1108.0,368.8 1110.0,361.2 1112.0,366.2 1113.8,367.5 1115.5,358.8 1117.5,372.5 1119.5,381.2 1121.2,376.2 1123.0,367.5 1125.0,365.0 1127.0,372.5 1128.8,376.2 1130.5,377.5 1132.5,373.8 1134.5,371.2 1136.2,358.8 1138.0,357.5 1139.5,375.0 1141.2,377.5 1143.0,373.8 1145.0,376.2 1146.8,365.0 1148.8,371.2 1150.5,380.0 1152.5,367.5 1154.5,373.8 1156.2,365.0 1158.0,372.5 1160.0,368.8 1162.0,362.5 1163.8,373.8 1165.5,385.0 1167.0,367.5 1168.8,360.0 1170.5,367.5 1172.0,358.8 1173.8,357.5 1175.5,371.2 1177.5,375.0 1179.5,372.5 1181.2,373.8 1183.0,368.8 1185.0,370.0 1186.8,360.0 1188.5,368.8 1190.5,360.0 1192.5,375.0 1194.5,373.8 1196.2,376.2 1198.0,371.2 1200.0,367.5 1202.0,361.2 1203.8,360.0 1205.5,362.5 1207.0,368.8 1208.8,353.8 1210.5,362.5 1212.5,370.0 1214.5,381.2 1216.2,371.2 1218.0,362.5 1220.0,366.2 1222.0,373.8 1223.8,361.2 1225.5,360.0 1227.5,367.5 1229.5,366.2 1231.2,373.8 1233.0,365.0 1235.0,360.0 1237.0,361.2 1238.8,373.8 1240.5,367.5 1242.5,365.0 1244.5,371.2 1246.2,370.0 1248.2,356.2 1250.0,367.5 1252.0,370.0 1253.8,365.0 1255.5,367.5 1257.5,360.0 1259.5,371.2 1261.2,361.2 1262.5,377.5 1264.5,378.8 1266.2,376.2 1268.0,365.0 1270.0,362.5 1272.0,371.2 1273.8,390.0 1275.5,370.0 1277.5,367.5 1278.8,358.8 1280.5,371.2 1282.5,367.5 1283.8,363.8 1285.5,377.5 1287.5,366.2 1289.5,360.0 1291.2,367.5 1293.0,359.5 1295.0,363.8 1297.0,363.0 1299.0,363.8" fill="none" stroke="#0000ff" stroke-width="1.15" stroke-linejoin="round"/>
</g>
<rect x="101.25" y="348.3" width="1198.25" height="84.19999999999999" fill="none" stroke="#000" stroke-width="0.8"/>
<line x1="104.5" x2="104.5" y1="432.5" y2="435.8" stroke="#000" stroke-width="0.8"/>
<text x="104.50" y="446.30" font-family="Liberation Sans" font-size="9.45" fill="#000" stroke="#000" stroke-width="0.2" text-anchor="middle" textLength="22.91" lengthAdjust="spacingAndGlyphs" xml:space="preserve">3500</text>
<line x1="163.3" x2="163.3" y1="432.5" y2="435.8" stroke="#000" stroke-width="0.8"/>
<text x="163.32" y="446.30" font-family="Liberation Sans" font-size="9.45" fill="#000" stroke="#000" stroke-width="0.2" text-anchor="middle" textLength="22.91" lengthAdjust="spacingAndGlyphs" xml:space="preserve">3600</text>
<line x1="222.2" x2="222.2" y1="432.5" y2="435.8" stroke="#000" stroke-width="0.8"/>
<text x="222.15" y="446.30" font-family="Liberation Sans" font-size="9.45" fill="#000" stroke="#000" stroke-width="0.2" text-anchor="middle" textLength="22.91" lengthAdjust="spacingAndGlyphs" xml:space="preserve">3700</text>
<line x1="281.0" x2="281.0" y1="432.5" y2="435.8" stroke="#000" stroke-width="0.8"/>
<text x="280.98" y="446.30" font-family="Liberation Sans" font-size="9.45" fill="#000" stroke="#000" stroke-width="0.2" text-anchor="middle" textLength="22.91" lengthAdjust="spacingAndGlyphs" xml:space="preserve">3800</text>
<line x1="339.8" x2="339.8" y1="432.5" y2="435.8" stroke="#000" stroke-width="0.8"/>
<text x="339.80" y="446.30" font-family="Liberation Sans" font-size="9.45" fill="#000" stroke="#000" stroke-width="0.2" text-anchor="middle" textLength="22.91" lengthAdjust="spacingAndGlyphs" xml:space="preserve">3900</text>
<line x1="398.6" x2="398.6" y1="432.5" y2="435.8" stroke="#000" stroke-width="0.8"/>
<text x="398.62" y="446.30" font-family="Liberation Sans" font-size="9.45" fill="#000" stroke="#000" stroke-width="0.2" text-anchor="middle" textLength="22.91" lengthAdjust="spacingAndGlyphs" xml:space="preserve">4000</text>
<line x1="457.5" x2="457.5" y1="432.5" y2="435.8" stroke="#000" stroke-width="0.8"/>
<text x="457.45" y="446.30" font-family="Liberation Sans" font-size="9.45" fill="#000" stroke="#000" stroke-width="0.2" text-anchor="middle" textLength="22.91" lengthAdjust="spacingAndGlyphs" xml:space="preserve">4100</text>
<line x1="516.3" x2="516.3" y1="432.5" y2="435.8" stroke="#000" stroke-width="0.8"/>
<text x="516.28" y="446.30" font-family="Liberation Sans" font-size="9.45" fill="#000" stroke="#000" stroke-width="0.2" text-anchor="middle" textLength="22.91" lengthAdjust="spacingAndGlyphs" xml:space="preserve">4200</text>
<line x1="575.1" x2="575.1" y1="432.5" y2="435.8" stroke="#000" stroke-width="0.8"/>
<text x="575.10" y="446.30" font-family="Liberation Sans" font-size="9.45" fill="#000" stroke="#000" stroke-width="0.2" text-anchor="middle" textLength="22.91" lengthAdjust="spacingAndGlyphs" xml:space="preserve">4300</text>
<line x1="633.9" x2="633.9" y1="432.5" y2="435.8" stroke="#000" stroke-width="0.8"/>
<text x="633.93" y="446.30" font-family="Liberation Sans" font-size="9.45" fill="#000" stroke="#000" stroke-width="0.2" text-anchor="middle" textLength="22.91" lengthAdjust="spacingAndGlyphs" xml:space="preserve">4400</text>
<line x1="692.8" x2="692.8" y1="432.5" y2="435.8" stroke="#000" stroke-width="0.8"/>
<text x="692.75" y="446.30" font-family="Liberation Sans" font-size="9.45" fill="#000" stroke="#000" stroke-width="0.2" text-anchor="middle" textLength="22.91" lengthAdjust="spacingAndGlyphs" xml:space="preserve">4500</text>
<line x1="751.6" x2="751.6" y1="432.5" y2="435.8" stroke="#000" stroke-width="0.8"/>
<text x="751.58" y="446.30" font-family="Liberation Sans" font-size="9.45" fill="#000" stroke="#000" stroke-width="0.2" text-anchor="middle" textLength="22.91" lengthAdjust="spacingAndGlyphs" xml:space="preserve">4600</text>
<line x1="810.4" x2="810.4" y1="432.5" y2="435.8" stroke="#000" stroke-width="0.8"/>
<text x="810.40" y="446.30" font-family="Liberation Sans" font-size="9.45" fill="#000" stroke="#000" stroke-width="0.2" text-anchor="middle" textLength="22.91" lengthAdjust="spacingAndGlyphs" xml:space="preserve">4700</text>
<line x1="869.2" x2="869.2" y1="432.5" y2="435.8" stroke="#000" stroke-width="0.8"/>
<text x="869.23" y="446.30" font-family="Liberation Sans" font-size="9.45" fill="#000" stroke="#000" stroke-width="0.2" text-anchor="middle" textLength="22.91" lengthAdjust="spacingAndGlyphs" xml:space="preserve">4800</text>
<line x1="928.1" x2="928.1" y1="432.5" y2="435.8" stroke="#000" stroke-width="0.8"/>
<text x="928.05" y="446.30" font-family="Liberation Sans" font-size="9.45" fill="#000" stroke="#000" stroke-width="0.2" text-anchor="middle" textLength="22.91" lengthAdjust="spacingAndGlyphs" xml:space="preserve">4900</text>
<line x1="986.9" x2="986.9" y1="432.5" y2="435.8" stroke="#000" stroke-width="0.8"/>
<text x="986.88" y="446.30" font-family="Liberation Sans" font-size="9.45" fill="#000" stroke="#000" stroke-width="0.2" text-anchor="middle" textLength="22.91" lengthAdjust="spacingAndGlyphs" xml:space="preserve">5000</text>
<line x1="1045.7" x2="1045.7" y1="432.5" y2="435.8" stroke="#000" stroke-width="0.8"/>
<text x="1045.70" y="446.30" font-family="Liberation Sans" font-size="9.45" fill="#000" stroke="#000" stroke-width="0.2" text-anchor="middle" textLength="22.91" lengthAdjust="spacingAndGlyphs" xml:space="preserve">5100</text>
<line x1="1104.5" x2="1104.5" y1="432.5" y2="435.8" stroke="#000" stroke-width="0.8"/>
<text x="1104.53" y="446.30" font-family="Liberation Sans" font-size="9.45" fill="#000" stroke="#000" stroke-width="0.2" text-anchor="middle" textLength="22.91" lengthAdjust="spacingAndGlyphs" xml:space="preserve">5200</text>
<line x1="1163.4" x2="1163.4" y1="432.5" y2="435.8" stroke="#000" stroke-width="0.8"/>
<text x="1163.35" y="446.30" font-family="Liberation Sans" font-size="9.45" fill="#000" stroke="#000" stroke-width="0.2" text-anchor="middle" textLength="22.91" lengthAdjust="spacingAndGlyphs" xml:space="preserve">5300</text>
<line x1="1222.2" x2="1222.2" y1="432.5" y2="435.8" stroke="#000" stroke-width="0.8"/>
<text x="1222.18" y="446.30" font-family="Liberation Sans" font-size="9.45" fill="#000" stroke="#000" stroke-width="0.2" text-anchor="middle" textLength="22.91" lengthAdjust="spacingAndGlyphs" xml:space="preserve">5400</text>
<line x1="1281.0" x2="1281.0" y1="432.5" y2="435.8" stroke="#000" stroke-width="0.8"/>
<text x="1281.00" y="446.30" font-family="Liberation Sans" font-size="9.45" fill="#000" stroke="#000" stroke-width="0.2" text-anchor="middle" textLength="22.91" lengthAdjust="spacingAndGlyphs" xml:space="preserve">5500</text>
<line x1="97.95" x2="101.25" y1="425.0" y2="425.0" stroke="#000" stroke-width="0.8"/>
<text x="95.65" y="428.40" font-family="Liberation Sans" font-size="9.45" fill="#000" stroke="#000" stroke-width="0.2" text-anchor="end" textLength="14.31" lengthAdjust="spacingAndGlyphs" xml:space="preserve">0.0</text>
<line x1="97.95" x2="101.25" y1="401.0" y2="401.0" stroke="#000" stroke-width="0.8"/>
<text x="95.65" y="404.40" font-family="Liberation Sans" font-size="9.45" fill="#000" stroke="#000" stroke-width="0.2" text-anchor="end" textLength="14.31" lengthAdjust="spacingAndGlyphs" xml:space="preserve">2.5</text>
<line x1="97.95" x2="101.25" y1="377.0" y2="377.0" stroke="#000" stroke-width="0.8"/>
<text x="95.65" y="380.40" font-family="Liberation Sans" font-size="9.45" fill="#000" stroke="#000" stroke-width="0.2" text-anchor="end" textLength="14.31" lengthAdjust="spacingAndGlyphs" xml:space="preserve">5.0</text>
<line x1="97.95" x2="101.25" y1="353.0" y2="353.0" stroke="#000" stroke-width="0.8"/>
<text x="95.65" y="356.40" font-family="Liberation Sans" font-size="9.45" fill="#000" stroke="#000" stroke-width="0.2" text-anchor="end" textLength="14.31" lengthAdjust="spacingAndGlyphs" xml:space="preserve">7.5</text>
<text x="105.00" y="346.00" font-family="Liberation Sans" font-size="9.03" fill="#000" stroke="#000" stroke-width="0.2" text-anchor="start" xml:space="preserve">e</text>
<text x="110.49" y="342.60" font-family="Liberation Sans" font-size="6.30" fill="#000" stroke="#000" stroke-width="0.12" text-anchor="start" textLength="12.66" lengthAdjust="spacingAndGlyphs" xml:space="preserve">−17</text>
<text x="123.45" y="346.00" font-family="Liberation Sans" font-size="9.03" fill="#000" stroke="#000" stroke-width="0.2" text-anchor="start" textLength="10.56" lengthAdjust="spacingAndGlyphs" xml:space="preserve">x2</text>
<text x="134.01" y="346.00" font-family="Liberation Sans" font-size="9.03" fill="#000" stroke="#000" stroke-width="0.2" text-anchor="start" font-style="italic" xml:space="preserve">Å</text>
<rect x="480.0" y="450.0" width="17.2" height="6.0" fill="#ff0000"/>
<text x="503.50" y="455.60" font-family="Liberation Sans" font-size="7.35" fill="#000" stroke="#000" stroke-width="0.12" text-anchor="start" textLength="12.01" lengthAdjust="spacingAndGlyphs" xml:space="preserve">Lyα</text>
<rect x="534.0" y="450.0" width="17.2" height="6.0" fill="#008000"/>
<text x="557.50" y="455.60" font-family="Liberation Sans" font-size="7.35" fill="#000" stroke="#000" stroke-width="0.12" text-anchor="start" textLength="9.64" lengthAdjust="spacingAndGlyphs" xml:space="preserve">OII</text>
<rect x="587.5" y="450.0" width="17.2" height="6.0" fill="#8a2be2"/>
<text x="611.00" y="455.60" font-family="Liberation Sans" font-size="7.35" fill="#000" stroke="#000" stroke-width="0.12" text-anchor="start" textLength="11.74" lengthAdjust="spacingAndGlyphs" xml:space="preserve">CIV</text>
<rect x="641.5" y="450.0" width="17.2" height="6.0" fill="#800080"/>
<text x="665.00" y="455.60" font-family="Liberation Sans" font-size="7.35" fill="#000" stroke="#000" stroke-width="0.12" text-anchor="start" textLength="11.08" lengthAdjust="spacingAndGlyphs" xml:space="preserve">CIII</text>
<rect x="695.5" y="450.0" width="17.2" height="6.0" fill="#ff00ff"/>
<text x="719.00" y="455.60" font-family="Liberation Sans" font-size="7.35" fill="#000" stroke="#000" stroke-width="0.12" text-anchor="start" textLength="14.61" lengthAdjust="spacingAndGlyphs" xml:space="preserve">MgII</text>
<rect x="749.0" y="450.0" width="17.2" height="6.0" fill="#ffa500"/>
<text x="772.50" y="455.60" font-family="Liberation Sans" font-size="7.35" fill="#000" stroke="#000" stroke-width="0.12" text-anchor="start" textLength="13.70" lengthAdjust="spacingAndGlyphs" xml:space="preserve">HeII</text>
<rect x="803.5" y="450.0" width="17.2" height="6.0" fill="#87ceeb"/>
<text x="827.00" y="455.60" font-family="Liberation Sans" font-size="7.35" fill="#000" stroke="#000" stroke-width="0.12" text-anchor="start" textLength="23.36" lengthAdjust="spacingAndGlyphs" xml:space="preserve">(K)CaII</text>
<rect x="869.5" y="450.0" width="17.2" height="6.0" fill="#87ceeb"/>
<text x="893.00" y="455.60" font-family="Liberation Sans" font-size="7.35" fill="#000" stroke="#000" stroke-width="0.12" text-anchor="start" textLength="24.03" lengthAdjust="spacingAndGlyphs" xml:space="preserve">(H)CaII</text>
<text x="144.00" y="525.80" font-family="Liberation Sans" font-size="13.23" fill="#000" stroke="#000" stroke-width="0.2" text-anchor="middle" textLength="90.39" lengthAdjust="spacingAndGlyphs" xml:space="preserve">Fiber Positions</text>
<line x1="78.3" x2="78.3" y1="680.5" y2="683.9" stroke="#000" stroke-width="0.8"/>
<line x1="66.8" x2="70.2" y1="672.4" y2="672.4" stroke="#000" stroke-width="0.8"/>
<text x="78.32" y="696.50" font-family="Liberation Sans" font-size="10.37" fill="#000" stroke="#000" stroke-width="0.2" text-anchor="middle" xml:space="preserve">−4</text>
<text x="64.20" y="675.98" font-family="Liberation Sans" font-size="10.37" fill="#000" stroke="#000" stroke-width="0.2" text-anchor="end" xml:space="preserve">−4</text>
<line x1="111.2" x2="111.2" y1="680.5" y2="683.9" stroke="#000" stroke-width="0.8"/>
<line x1="66.8" x2="70.2" y1="639.5" y2="639.5" stroke="#000" stroke-width="0.8"/>
<text x="111.16" y="696.50" font-family="Liberation Sans" font-size="10.37" fill="#000" stroke="#000" stroke-width="0.2" text-anchor="middle" xml:space="preserve">−2</text>
<text x="64.20" y="643.14" font-family="Liberation Sans" font-size="10.37" fill="#000" stroke="#000" stroke-width="0.2" text-anchor="end" xml:space="preserve">−2</text>
<line x1="144.0" x2="144.0" y1="680.5" y2="683.9" stroke="#000" stroke-width="0.8"/>
<line x1="66.8" x2="70.2" y1="606.7" y2="606.7" stroke="#000" stroke-width="0.8"/>
<text x="144.00" y="696.50" font-family="Liberation Sans" font-size="10.37" fill="#000" stroke="#000" stroke-width="0.2" text-anchor="middle" xml:space="preserve">0</text>
<text x="64.20" y="610.30" font-family="Liberation Sans" font-size="10.37" fill="#000" stroke="#000" stroke-width="0.2" text-anchor="end" xml:space="preserve">0</text>
<line x1="176.8" x2="176.8" y1="680.5" y2="683.9" stroke="#000" stroke-width="0.8"/>
<line x1="66.8" x2="70.2" y1="573.9" y2="573.9" stroke="#000" stroke-width="0.8"/>
<text x="176.84" y="696.50" font-family="Liberation Sans" font-size="10.37" fill="#000" stroke="#000" stroke-width="0.2" text-anchor="middle" xml:space="preserve">2</text>
<text x="64.20" y="577.46" font-family="Liberation Sans" font-size="10.37" fill="#000" stroke="#000" stroke-width="0.2" text-anchor="end" xml:space="preserve">2</text>
<line x1="209.7" x2="209.7" y1="680.5" y2="683.9" stroke="#000" stroke-width="0.8"/>
<line x1="66.8" x2="70.2" y1="541.0" y2="541.0" stroke="#000" stroke-width="0.8"/>
<text x="209.68" y="696.50" font-family="Liberation Sans" font-size="10.37" fill="#000" stroke="#000" stroke-width="0.2" text-anchor="middle" xml:space="preserve">4</text>
<text x="64.20" y="544.62" font-family="Liberation Sans" font-size="10.37" fill="#000" stroke="#000" stroke-width="0.2" text-anchor="end" xml:space="preserve">4</text>
<clipPath id="c1"><rect x="70.2" y="532.5" width="148.3" height="148.0"/></clipPath>
<rect x="70.2" y="532.5" width="148.3" height="148.0" fill="#f3f3f3"/>
<g clip-path="url(#c1)"><ellipse cx="0" cy="0" rx="75.5" ry="41.1" fill="url(#gal)" transform="translate(146.6,607.4) rotate(-30)"/><ellipse cx="0" cy="0" rx="16.4" ry="14.0" fill="url(#core)" transform="translate(146.6,607.4) rotate(-30)"/></g>
<g fill="none" stroke="#444" stroke-opacity="0.8" stroke-width="1.0"><circle cx="126.4" cy="555.0" r="12.2"/><circle cx="149.9" cy="553.2" r="12.2"/><circle cx="115.6" cy="577.3" r="12.2"/><circle cx="140.5" cy="575.6" r="12.2"/><circle cx="164.2" cy="572.4" r="12.2"/><circle cx="188.1" cy="570.3" r="12.2"/><circle cx="106.5" cy="599.6" r="12.2"/><circle cx="178.3" cy="592.7" r="12.2"/><circle cx="96.5" cy="620.9" r="12.2"/><circle cx="120.6" cy="618.9" r="12.2"/><circle cx="191.9" cy="611.4" r="12.2"/><circle cx="110.3" cy="641.3" r="12.2"/><circle cx="135.0" cy="638.8" r="12.2"/><circle cx="158.4" cy="636.6" r="12.2"/><circle cx="182.4" cy="634.1" r="12.2"/><circle cx="123.9" cy="660.7" r="12.2"/><circle cx="148.7" cy="659.0" r="12.2"/><circle cx="172.8" cy="655.7" r="12.2"/></g>
<circle cx="131.0" cy="596.3" r="12.2" fill="none" stroke="#ffa500" stroke-width="1.3"/>
<circle cx="169.0" cy="613.7" r="12.2" fill="none" stroke="#ff0000" stroke-width="1.3"/>
<circle cx="153.7" cy="594.3" r="12.2" fill="none" stroke="#00ff00" stroke-width="1.3"/>
<circle cx="144.3" cy="617.2" r="12.2" fill="none" stroke="#0000ff" stroke-width="1.3"/>
<rect x="94.7" y="557.4" width="98.5" height="98.5" fill="none" stroke="#ff0000" stroke-width="1.2"/>
<path d="M141.5,606.7 h5 M144.0,604.2 v5" stroke="#ff0000" stroke-width="1.1"/>
<text x="144.00" y="546.20" font-family="Liberation Sans" font-size="10.50" fill="#ff0000" stroke="#ff0000" stroke-width="0.2" text-anchor="middle" xml:space="preserve">N</text>
<text x="80.10" y="610.00" font-family="Liberation Sans" font-size="10.50" fill="#ff0000" stroke="#ff0000" stroke-width="0.2" text-anchor="middle" xml:space="preserve">E</text>
<rect x="70.2" y="532.5" width="148.3" height="148.0" fill="none" stroke="#000" stroke-width="0.8"/>
<text x="144.00" y="706.80" font-family="Liberation Sans" font-size="11.03" fill="#000" stroke="#000" stroke-width="0.2" text-anchor="middle" textLength="39.47" lengthAdjust="spacingAndGlyphs" xml:space="preserve">arcsecs</text>
<text x="329.30" y="525.80" font-family="Liberation Sans" font-size="13.23" fill="#000" stroke="#000" stroke-width="0.2" text-anchor="middle" textLength="80.23" lengthAdjust="spacingAndGlyphs" xml:space="preserve">Lineflux Map</text>
<line x1="263.6" x2="263.6" y1="680.5" y2="683.9" stroke="#000" stroke-width="0.8"/>
<line x1="251.9" x2="255.3" y1="672.4" y2="672.4" stroke="#000" stroke-width="0.8"/>
<text x="263.62" y="696.50" font-family="Liberation Sans" font-size="10.37" fill="#000" stroke="#000" stroke-width="0.2" text-anchor="middle" xml:space="preserve">−4</text>
<text x="249.30" y="675.98" font-family="Liberation Sans" font-size="10.37" fill="#000" stroke="#000" stroke-width="0.2" text-anchor="end" xml:space="preserve">−4</text>
<line x1="296.5" x2="296.5" y1="680.5" y2="683.9" stroke="#000" stroke-width="0.8"/>
<line x1="251.9" x2="255.3" y1="639.5" y2="639.5" stroke="#000" stroke-width="0.8"/>
<text x="296.46" y="696.50" font-family="Liberation Sans" font-size="10.37" fill="#000" stroke="#000" stroke-width="0.2" text-anchor="middle" xml:space="preserve">−2</text>
<text x="249.30" y="643.14" font-family="Liberation Sans" font-size="10.37" fill="#000" stroke="#000" stroke-width="0.2" text-anchor="end" xml:space="preserve">−2</text>
<line x1="329.3" x2="329.3" y1="680.5" y2="683.9" stroke="#000" stroke-width="0.8"/>
<line x1="251.9" x2="255.3" y1="606.7" y2="606.7" stroke="#000" stroke-width="0.8"/>
<text x="329.30" y="696.50" font-family="Liberation Sans" font-size="10.37" fill="#000" stroke="#000" stroke-width="0.2" text-anchor="middle" xml:space="preserve">0</text>
<text x="249.30" y="610.30" font-family="Liberation Sans" font-size="10.37" fill="#000" stroke="#000" stroke-width="0.2" text-anchor="end" xml:space="preserve">0</text>
<line x1="362.1" x2="362.1" y1="680.5" y2="683.9" stroke="#000" stroke-width="0.8"/>
<line x1="251.9" x2="255.3" y1="573.9" y2="573.9" stroke="#000" stroke-width="0.8"/>
<text x="362.14" y="696.50" font-family="Liberation Sans" font-size="10.37" fill="#000" stroke="#000" stroke-width="0.2" text-anchor="middle" xml:space="preserve">2</text>
<text x="249.30" y="577.46" font-family="Liberation Sans" font-size="10.37" fill="#000" stroke="#000" stroke-width="0.2" text-anchor="end" xml:space="preserve">2</text>
<line x1="395.0" x2="395.0" y1="680.5" y2="683.9" stroke="#000" stroke-width="0.8"/>
<line x1="251.9" x2="255.3" y1="541.0" y2="541.0" stroke="#000" stroke-width="0.8"/>
<text x="394.98" y="696.50" font-family="Liberation Sans" font-size="10.37" fill="#000" stroke="#000" stroke-width="0.2" text-anchor="middle" xml:space="preserve">4</text>
<text x="249.30" y="544.62" font-family="Liberation Sans" font-size="10.37" fill="#000" stroke="#000" stroke-width="0.2" text-anchor="end" xml:space="preserve">4</text>
<clipPath id="c2"><rect x="255.3" y="532.5" width="148.3" height="148.0"/></clipPath>
<rect x="255.3" y="532.5" width="148.3" height="148.0" fill="#3c4e8a"/>
<g clip-path="url(#c2)"><g filter="url(#bl)">
<ellipse cx="0" cy="0" rx="64" ry="27" fill="#46307c" opacity="0.6" transform="translate(335.0,612.0) rotate(28)"/>
<ellipse cx="0" cy="0" rx="25" ry="13" fill="#440a55" opacity="1.0" transform="translate(262.0,572.0) rotate(40)"/>
<ellipse cx="0" cy="0" rx="10" ry="7" fill="#440a55" opacity="0.6" transform="translate(257.0,553.0) rotate(40)"/>
<ellipse cx="0" cy="0" rx="34" ry="15" fill="#440a55" opacity="1.0" transform="translate(343.0,618.0) rotate(25)"/>
<ellipse cx="0" cy="0" rx="22" ry="11" fill="#440a55" opacity="0.85" transform="translate(356.0,623.0) rotate(25)"/>
<ellipse cx="0" cy="0" rx="16" ry="10" fill="#440a55" opacity="0.9" transform="translate(328.0,603.0) rotate(30)"/>
<ellipse cx="0" cy="0" rx="12" ry="7" fill="#440a55" opacity="0.9" transform="translate(391.0,559.5) rotate(35)"/>
<ellipse cx="0" cy="0" rx="27" ry="10" fill="#440a55" opacity="0.75" transform="translate(350.0,669.0) rotate(0)"/>
<ellipse cx="0" cy="0" rx="16" ry="8" fill="#440a55" opacity="0.55" transform="translate(336.0,549.0) rotate(10)"/>
<ellipse cx="0" cy="0" rx="20" ry="11" fill="#46307c" opacity="0.45" transform="translate(296.0,645.0) rotate(25)"/>
<ellipse cx="0" cy="0" rx="12" ry="16" fill="#46307c" opacity="0.3" transform="translate(275.0,615.0) rotate(0)"/>
<ellipse cx="0" cy="0" rx="10" ry="7" fill="#22908c" opacity="0.95" transform="translate(386.0,584.5) rotate(20)"/>
<ellipse cx="0" cy="0" rx="6" ry="9" fill="#22908c" opacity="0.55" transform="translate(389.0,626.0) rotate(0)"/>
<ellipse cx="0" cy="0" rx="11" ry="7" fill="#22908c" opacity="0.9" transform="translate(277.0,675.0) rotate(0)"/>
<ellipse cx="0" cy="0" rx="10" ry="5" fill="#22908c" opacity="0.55" transform="translate(311.0,533.0) rotate(0)"/>
<ellipse cx="0" cy="0" rx="16" ry="5" fill="#3a6c90" opacity="0.5" transform="translate(304.0,568.0) rotate(-15)"/>
<ellipse cx="0" cy="0" rx="8" ry="8" fill="#3a6c90" opacity="0.4" transform="translate(398.0,668.0) rotate(0)"/>
</g></g>
<rect x="280.0" y="557.4" width="98.5" height="98.5" fill="none" stroke="#ff0000" stroke-width="1.2"/>
<g stroke="#ff0000" stroke-width="1.2"><line x1="329.3" x2="329.3" y1="569.8" y2="599.8"/><line x1="329.3" x2="329.3" y1="614.6" y2="644.1"/><line x1="292.4" x2="321.9" y1="606.7" y2="606.7"/><line x1="336.7" x2="367.1" y1="606.7" y2="606.7"/></g>
<text x="329.30" y="546.20" font-family="Liberation Sans" font-size="10.50" fill="#ff0000" stroke="#ff0000" stroke-width="0.2" text-anchor="middle" xml:space="preserve">N</text>
<text x="265.20" y="610.00" font-family="Liberation Sans" font-size="10.50" fill="#ff0000" stroke="#ff0000" stroke-width="0.2" text-anchor="middle" xml:space="preserve">E</text>
<rect x="255.3" y="532.5" width="148.3" height="148.0" fill="none" stroke="#000" stroke-width="0.8"/>
<text x="329.30" y="706.80" font-family="Liberation Sans" font-size="11.03" fill="#000" stroke="#000" stroke-width="0.2" text-anchor="middle" textLength="102.58" lengthAdjust="spacingAndGlyphs" xml:space="preserve">s/b: -1.51 +/- 0.089</text>
<text x="514.60" y="525.80" font-family="Liberation Sans" font-size="13.23" fill="#000" stroke="#000" stroke-width="0.2" text-anchor="middle" textLength="73.34" lengthAdjust="spacingAndGlyphs" xml:space="preserve">HSC(26.2) r</text>
<line x1="448.9" x2="448.9" y1="680.5" y2="683.9" stroke="#000" stroke-width="0.8"/>
<line x1="437.0" x2="440.4" y1="672.4" y2="672.4" stroke="#000" stroke-width="0.8"/>
<text x="448.92" y="696.50" font-family="Liberation Sans" font-size="10.37" fill="#000" stroke="#000" stroke-width="0.2" text-anchor="middle" xml:space="preserve">−4</text>
<text x="434.40" y="675.98" font-family="Liberation Sans" font-size="10.37" fill="#000" stroke="#000" stroke-width="0.2" text-anchor="end" xml:space="preserve">−4</text>
<line x1="481.8" x2="481.8" y1="680.5" y2="683.9" stroke="#000" stroke-width="0.8"/>
<line x1="437.0" x2="440.4" y1="639.5" y2="639.5" stroke="#000" stroke-width="0.8"/>
<text x="481.76" y="696.50" font-family="Liberation Sans" font-size="10.37" fill="#000" stroke="#000" stroke-width="0.2" text-anchor="middle" xml:space="preserve">−2</text>
<text x="434.40" y="643.14" font-family="Liberation Sans" font-size="10.37" fill="#000" stroke="#000" stroke-width="0.2" text-anchor="end" xml:space="preserve">−2</text>
<line x1="514.6" x2="514.6" y1="680.5" y2="683.9" stroke="#000" stroke-width="0.8"/>
<line x1="437.0" x2="440.4" y1="606.7" y2="606.7" stroke="#000" stroke-width="0.8"/>
<text x="514.60" y="696.50" font-family="Liberation Sans" font-size="10.37" fill="#000" stroke="#000" stroke-width="0.2" text-anchor="middle" xml:space="preserve">0</text>
<text x="434.40" y="610.30" font-family="Liberation Sans" font-size="10.37" fill="#000" stroke="#000" stroke-width="0.2" text-anchor="end" xml:space="preserve">0</text>
<line x1="547.4" x2="547.4" y1="680.5" y2="683.9" stroke="#000" stroke-width="0.8"/>
<line x1="437.0" x2="440.4" y1="573.9" y2="573.9" stroke="#000" stroke-width="0.8"/>
<text x="547.44" y="696.50" font-family="Liberation Sans" font-size="10.37" fill="#000" stroke="#000" stroke-width="0.2" text-anchor="middle" xml:space="preserve">2</text>
<text x="434.40" y="577.46" font-family="Liberation Sans" font-size="10.37" fill="#000" stroke="#000" stroke-width="0.2" text-anchor="end" xml:space="preserve">2</text>
<line x1="580.3" x2="580.3" y1="680.5" y2="683.9" stroke="#000" stroke-width="0.8"/>
<line x1="437.0" x2="440.4" y1="541.0" y2="541.0" stroke="#000" stroke-width="0.8"/>
<text x="580.28" y="696.50" font-family="Liberation Sans" font-size="10.37" fill="#000" stroke="#000" stroke-width="0.2" text-anchor="middle" xml:space="preserve">4</text>
<text x="434.40" y="544.62" font-family="Liberation Sans" font-size="10.37" fill="#000" stroke="#000" stroke-width="0.2" text-anchor="end" xml:space="preserve">4</text>
<clipPath id="c3"><rect x="440.4" y="532.5" width="148.3" height="148.0"/></clipPath>
<rect x="440.4" y="532.5" width="148.3" height="148.0" fill="#f5f5f5"/>
<g clip-path="url(#c3)"><ellipse cx="0" cy="0" rx="75.5" ry="41.1" fill="url(#gal)" transform="translate(517.2,609.3) rotate(-36)"/><ellipse cx="0" cy="0" rx="16.4" ry="14.0" fill="url(#core)" transform="translate(517.2,609.3) rotate(-36)"/></g>
<rect x="465.3" y="557.4" width="98.5" height="98.5" fill="none" stroke="#ff0000" stroke-width="1.2"/>
<g stroke="#ff0000" stroke-width="1.2"><line x1="514.6" x2="514.6" y1="569.8" y2="599.8"/><line x1="514.6" x2="514.6" y1="614.6" y2="644.1"/><line x1="477.7" x2="507.2" y1="606.7" y2="606.7"/><line x1="522.0" x2="552.4" y1="606.7" y2="606.7"/></g>
<rect x="512.0" y="603.1" width="12.6" height="12.6" fill="none" stroke="#0000ff" stroke-width="1.2"/>
<g clip-path="url(#c3)"><ellipse cx="0" cy="0" rx="85.7" ry="37.8" fill="none" stroke="#ffd700" stroke-width="1.5" transform="translate(519.1,609.5) rotate(-35.8)"/></g>
<text x="514.60" y="546.20" font-family="Liberation Sans" font-size="10.50" fill="#ff0000" stroke="#ff0000" stroke-width="0.2" text-anchor="middle" xml:space="preserve">N</text>
<text x="450.30" y="610.00" font-family="Liberation Sans" font-size="10.50" fill="#ff0000" stroke="#ff0000" stroke-width="0.2" text-anchor="middle" xml:space="preserve">E</text>
<rect x="440.4" y="532.5" width="148.3" height="148.0" fill="none" stroke="#000" stroke-width="0.8"/>
<text x="514.60" y="706.80" font-family="Liberation Sans" font-size="11.03" fill="#000" stroke="#000" stroke-width="0.2" text-anchor="middle" textLength="116.65" lengthAdjust="spacingAndGlyphs" xml:space="preserve">m:19.3  re:3.5"  s:0.3"</text>
</svg></body></html>
